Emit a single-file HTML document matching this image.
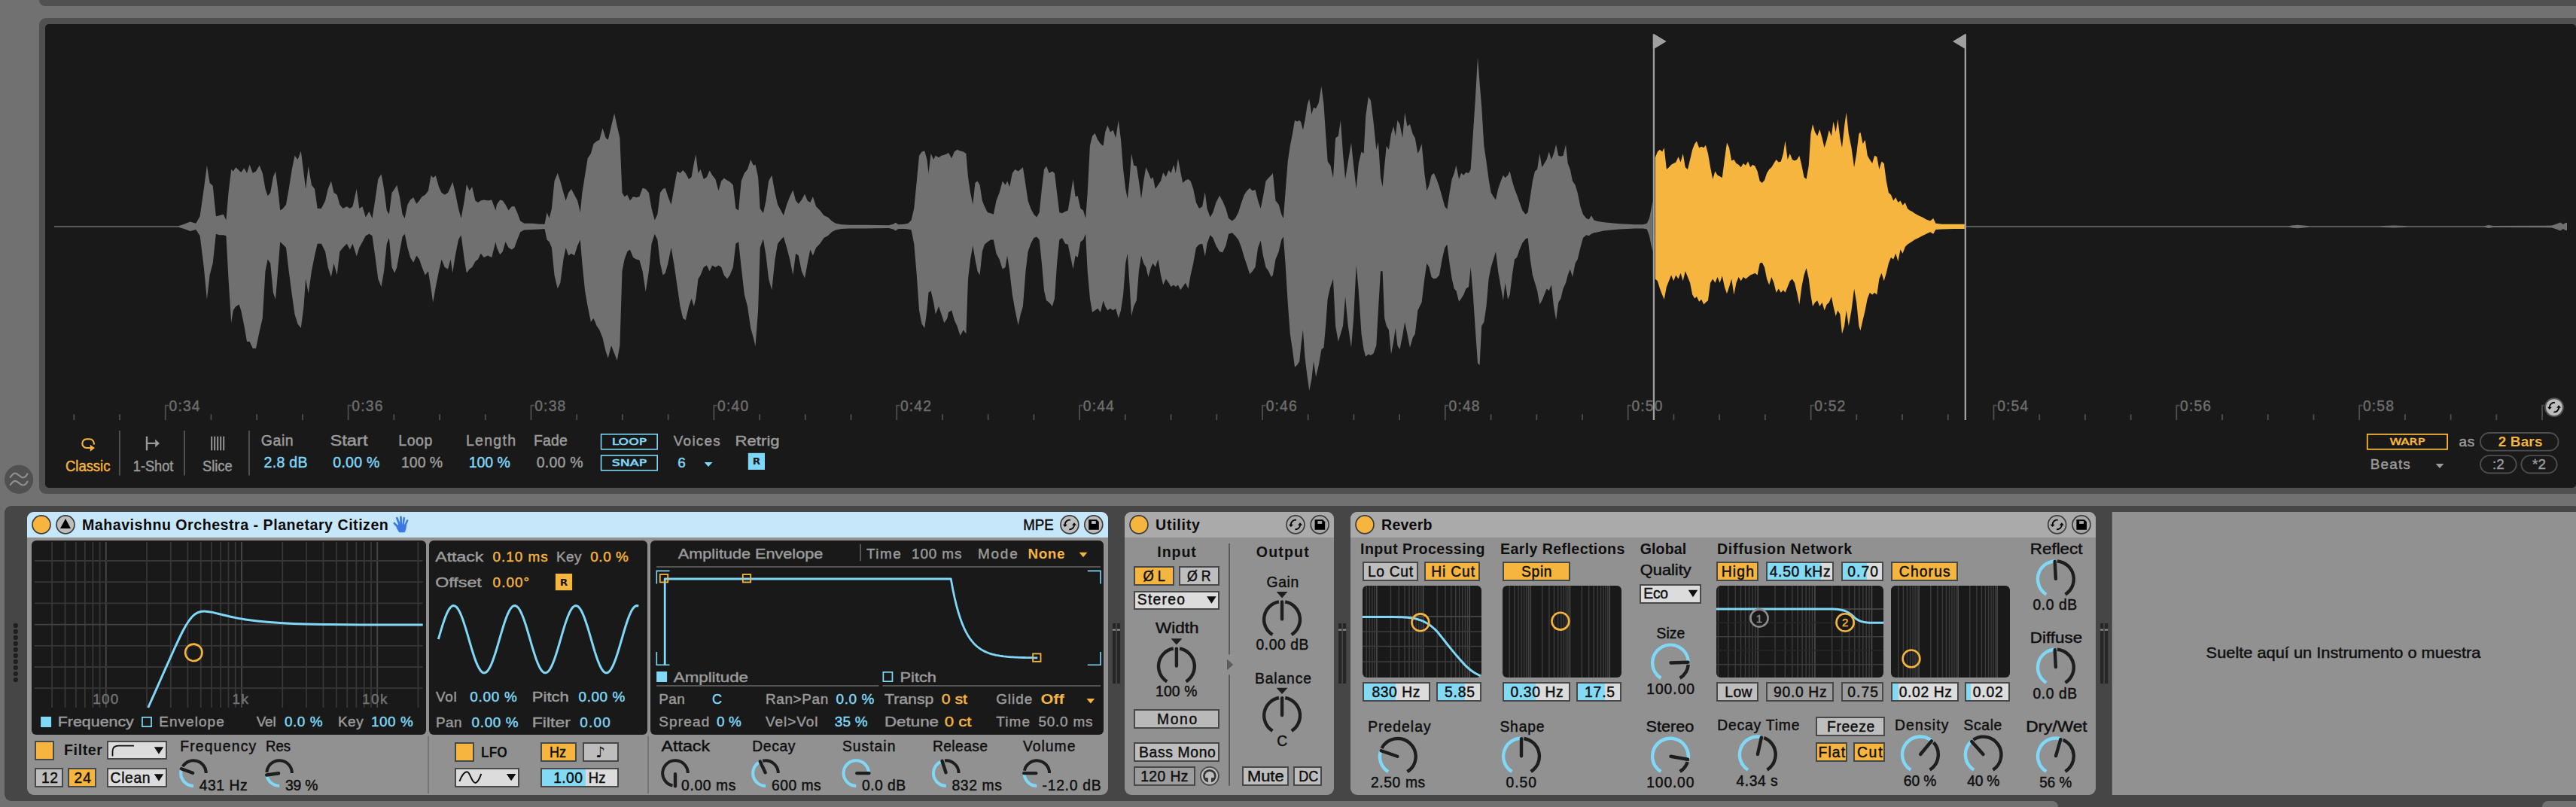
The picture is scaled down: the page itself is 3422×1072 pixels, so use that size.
<!DOCTYPE html>
<html lang="es"><head><meta charset="utf-8"><title>Live - Simpler</title>
<style>
html,body{margin:0;padding:0;background:#717171;overflow:hidden}
body{width:3422px;height:1072px}
svg{display:block;font-family:"Liberation Sans",sans-serif}
text{white-space:pre}
.wide{font-family:"DejaVu Sans","Liberation Sans",sans-serif}
</style></head><body>
<svg width="3422" height="1072" viewBox="0 0 3422 1072">
<g id="sample-panel">
<rect x="52.00" y="-10.00" width="3422.00" height="18.00" fill="#505050" rx="8" />
<rect x="52.00" y="24.00" width="3422.00" height="632.00" fill="#505050" rx="9" />
<rect x="60.00" y="32.00" width="3362.00" height="616.00" fill="#191919" rx="5" />
<polygon points="72.0,300.15 236.9,300.15 244.7,297.75 252.5,294.62 260.3,296.70 265.6,287.34 270.8,250.91 274.9,219.69 278.6,243.10 282.7,246.75 286.9,287.34 291.6,286.30 296.8,284.74 300.4,292.54 303.5,256.11 307.2,224.89 309.8,227.49 313.4,222.29 317.6,226.45 320.2,229.05 324.4,223.33 328.0,230.10 331.6,218.65 335.8,230.10 340.0,227.49 344.6,219.69 348.8,230.10 352.5,250.91 355.6,260.28 359.2,256.11 362.9,235.30 366.0,227.49 369.1,250.91 372.2,279.53 375.9,276.93 380.0,271.73 383.7,250.91 387.8,224.89 391.5,206.68 395.6,211.88 399.8,200.43 403.5,230.10 406.1,250.91 409.7,220.73 413.9,245.71 418.0,250.91 421.7,276.93 426.9,276.93 432.1,266.52 435.7,250.91 439.9,240.50 443.5,256.11 447.7,258.72 451.3,271.73 455.5,276.93 460.7,274.33 464.9,276.93 468.5,274.33 473.7,250.91 477.3,276.93 481.5,274.33 485.7,288.38 490.4,281.09 494.5,289.94 498.2,266.52 502.3,237.90 506.5,231.14 510.1,250.91 513.8,279.53 516.9,284.74 520.5,256.11 524.2,250.91 527.3,245.71 530.9,261.32 534.6,284.74 537.7,289.94 541.4,271.73 545.0,265.48 549.2,262.36 553.3,270.69 557.0,266.52 560.6,261.32 564.8,258.72 568.9,253.51 572.6,232.70 575.2,236.34 578.8,233.22 583.0,248.31 586.6,256.11 590.8,258.72 595.0,256.11 598.6,248.31 601.2,241.54 604.8,256.11 609.0,276.93 612.6,289.94 616.8,266.52 619.9,244.67 623.6,253.51 627.2,248.31 631.4,266.52 635.0,269.12 638.7,266.52 642.8,265.48 648.0,266.52 653.2,265.48 658.4,279.53 660.0,271.73 664.2,265.48 667.8,266.52 671.4,271.73 675.6,279.53 679.8,274.33 683.4,274.33 687.1,282.13 691.2,293.58 696.4,296.70 706.8,296.70 717.2,297.75 723.5,297.75 726.6,282.13 729.7,289.94 732.9,276.93 736.5,240.50 740.7,230.10 744.3,240.50 748.5,256.11 751.6,266.52 755.2,256.11 758.9,250.91 763.0,258.72 767.2,266.52 770.8,282.13 773.4,256.11 777.1,232.70 780.7,210.32 784.9,204.08 788.5,191.07 792.7,187.42 796.3,185.86 800.5,170.25 804.7,183.26 807.8,185.86 812.0,167.65 816.1,150.48 819.8,167.65 823.4,183.26 826.5,256.11 829.6,261.32 833.3,258.72 836.9,266.52 841.1,261.32 845.3,262.36 849.4,261.32 853.6,249.87 857.7,250.91 861.9,256.11 865.6,276.93 869.7,292.54 873.4,284.74 877.0,256.11 880.6,250.91 883.8,249.87 887.4,261.32 891.6,271.73 895.2,250.91 899.4,227.49 903.5,230.10 907.2,225.93 910.8,230.10 915.0,237.90 918.6,235.30 921.8,217.09 924.4,205.12 927.5,230.10 930.6,224.89 934.8,237.90 938.9,235.30 942.6,226.45 946.2,232.70 950.4,237.90 954.5,253.51 958.2,240.50 961.8,236.86 966.0,239.46 969.6,241.54 973.8,245.71 977.4,276.93 981.1,279.53 984.7,240.50 988.9,230.10 993.0,224.89 997.2,211.88 1000.8,219.69 1003.5,218.65 1007.1,235.30 1009.7,276.93 1013.9,283.17 1017.5,266.52 1021.1,240.50 1025.3,232.70 1029.5,256.11 1033.1,271.73 1037.3,279.53 1040.9,286.30 1045.1,271.73 1049.2,261.32 1053.4,252.47 1057.1,266.52 1060.7,270.69 1064.9,265.48 1069.0,257.68 1072.7,266.52 1076.3,269.12 1079.9,261.32 1084.1,274.33 1089.3,279.53 1094.5,286.30 1099.7,288.38 1104.9,293.58 1110.1,296.70 1117.9,298.27 1128.3,298.79 1149.2,298.79 1180.4,299.31 1186.6,297.75 1189.7,295.66 1193.4,298.27 1201.2,297.75 1206.4,296.70 1210.6,292.54 1214.2,276.93 1217.8,240.50 1221.0,206.68 1224.6,201.47 1228.3,200.43 1231.4,211.88 1233.5,230.10 1236.6,204.08 1240.2,211.88 1242.8,206.68 1247.0,209.28 1250.6,206.68 1254.3,205.64 1258.4,204.08 1260.0,203.04 1264.2,210.32 1267.8,201.47 1271.4,198.87 1275.6,200.43 1279.8,201.47 1283.4,204.08 1286.0,235.30 1289.1,256.11 1292.3,271.73 1295.4,243.10 1298.5,240.50 1301.6,245.71 1304.8,266.52 1307.9,274.33 1312.0,282.13 1316.2,283.17 1319.8,284.74 1323.5,266.52 1327.6,256.11 1331.8,240.50 1335.5,245.71 1338.1,240.50 1341.2,248.31 1344.8,230.10 1348.5,224.89 1352.6,227.49 1355.8,224.89 1358.9,222.29 1362.5,245.71 1365.6,266.52 1369.3,276.93 1373.4,284.74 1377.1,288.38 1380.7,282.13 1383.9,250.91 1387.0,224.89 1390.1,220.73 1393.7,230.10 1397.9,227.49 1401.0,230.10 1404.1,256.11 1407.3,282.13 1410.9,283.17 1415.1,281.09 1418.7,279.53 1421.8,261.32 1425.5,237.90 1428.6,261.32 1431.7,260.28 1435.4,276.93 1439.0,279.53 1442.1,289.94 1444.7,256.11 1447.9,193.67 1451.0,180.66 1454.6,177.02 1458.3,185.86 1461.9,191.07 1465.6,193.67 1468.2,175.46 1471.3,166.61 1474.9,175.46 1478.6,172.85 1482.2,183.26 1485.8,159.84 1489.0,185.86 1492.1,224.89 1495.2,250.91 1497.8,263.92 1500.4,240.50 1503.0,204.08 1506.1,219.69 1509.8,220.73 1512.9,240.50 1516.0,263.92 1519.2,240.50 1522.3,222.29 1525.4,229.05 1529.0,237.90 1531.6,235.30 1534.8,250.91 1538.4,245.71 1542.0,240.50 1545.2,229.05 1548.8,235.30 1552.5,225.93 1555.6,230.10 1559.2,218.65 1561.8,230.10 1564.9,210.84 1568.1,227.49 1571.2,243.10 1574.8,239.46 1578.5,237.90 1581.6,240.50 1585.2,250.91 1588.9,269.12 1593.0,276.93 1597.2,274.33 1600.8,255.07 1603.5,276.93 1607.6,288.38 1611.3,282.13 1615.4,269.12 1620.1,259.76 1624.3,267.56 1628.4,276.93 1632.1,289.94 1636.8,293.58 1640.9,289.94 1645.1,282.13 1649.2,269.12 1652.9,258.72 1656.5,253.51 1660.2,249.87 1663.8,253.51 1667.5,251.95 1671.1,266.52 1674.7,276.93 1677.9,261.32 1681.5,240.50 1685.2,236.34 1688.8,232.70 1690.9,230.10 1694.5,266.52 1698.7,271.73 1702.3,284.74 1704.9,289.94 1707.5,256.11 1710.7,214.48 1713.8,193.67 1716.9,178.06 1720.0,159.84 1723.1,161.41 1726.3,159.84 1728.3,162.45 1730.9,172.85 1733.5,159.84 1736.7,139.03 1739.3,131.22 1742.4,152.04 1745.0,142.67 1748.1,144.23 1751.8,136.43 1755.4,114.57 1758.5,139.03 1761.1,178.06 1763.7,214.48 1767.4,219.69 1771.0,236.34 1774.1,183.26 1777.8,180.66 1780.9,159.84 1784.0,204.08 1787.1,237.90 1790.8,214.48 1795.0,189.51 1798.1,219.69 1801.7,250.91 1804.8,217.09 1808.5,201.47 1811.6,204.08 1814.2,154.64 1817.8,128.62 1821.0,133.82 1824.6,162.45 1828.3,198.87 1830.9,188.46 1834.0,235.30 1836.6,248.31 1839.2,219.69 1841.8,193.67 1844.9,198.87 1848.0,178.06 1851.2,167.65 1853.8,180.66 1856.4,159.84 1859.5,165.05 1863.1,183.26 1866.2,149.44 1869.4,167.65 1873.0,165.05 1876.7,178.06 1879.8,183.26 1883.4,204.08 1886.0,198.87 1888.6,191.07 1892.3,230.10 1895.4,253.51 1898.5,245.71 1901.6,232.70 1904.8,230.10 1908.4,237.90 1912.0,248.31 1915.7,261.32 1919.3,274.33 1922.4,277.97 1925.6,256.11 1928.7,237.90 1931.8,230.10 1934.4,219.69 1938.1,237.90 1941.2,230.10 1944.3,232.70 1947.4,229.05 1951.1,230.10 1953.7,224.89 1956.8,178.06 1959.9,131.22 1963.0,76.06 1965.6,110.41 1968.2,141.63 1971.4,193.67 1974.5,214.48 1977.6,237.90 1980.7,256.11 1983.9,261.32 1987.0,265.48 1990.1,250.91 1993.7,240.50 1996.9,232.70 1999.5,236.34 2003.1,232.70 2005.7,227.49 2008.8,240.50 2012.0,250.91 2015.1,258.72 2018.7,269.12 2022.4,279.53 2026.5,284.74 2029.6,282.13 2032.8,261.32 2035.9,240.50 2039.0,227.49 2042.1,224.89 2045.3,204.08 2048.4,222.29 2051.5,217.09 2054.6,211.88 2057.7,201.47 2060.9,211.88 2064.0,204.08 2067.1,192.11 2070.2,206.68 2073.4,207.72 2076.5,206.68 2080.1,192.11 2082.7,217.09 2085.8,224.89 2089.0,240.50 2092.6,245.71 2095.7,256.11 2099.4,274.33 2103.0,284.74 2107.2,289.94 2110.8,291.50 2113.9,286.30 2117.6,292.54 2122.8,294.10 2130.6,295.14 2141.0,296.18 2151.4,297.22 2161.8,297.75 2172.2,298.27 2182.6,298.27 2187.8,296.70 2191.0,289.94 2193.6,276.93 2195.6,266.52 2195.6,334.17 2193.6,326.37 2191.0,313.36 2187.8,304.51 2182.6,303.47 2172.2,303.47 2161.8,303.99 2151.4,304.51 2141.0,305.55 2130.6,306.59 2122.8,308.15 2117.6,309.19 2113.9,310.75 2110.8,313.36 2107.2,312.32 2103.0,315.96 2099.4,328.97 2095.7,344.58 2092.6,349.78 2089.0,368.00 2085.8,357.59 2082.7,365.39 2080.1,375.80 2076.5,383.61 2073.4,396.62 2070.2,401.82 2067.1,425.24 2064.0,407.03 2060.9,378.40 2057.7,386.21 2054.6,383.61 2051.5,391.41 2048.4,399.22 2045.3,404.42 2042.1,386.21 2039.0,375.80 2035.9,365.39 2032.8,344.58 2029.6,315.96 2026.5,317.52 2022.4,322.72 2018.7,331.57 2015.1,341.98 2012.0,344.58 2008.8,365.39 2005.7,391.41 2003.1,397.66 1999.5,375.80 1996.9,399.22 1993.7,381.01 1990.1,360.19 1987.0,334.17 1983.9,344.58 1980.7,354.99 1977.6,370.60 1974.5,407.03 1971.4,427.84 1968.2,433.04 1965.6,485.08 1963.0,482.48 1959.9,438.25 1956.8,391.41 1953.7,354.99 1951.1,381.01 1947.4,383.61 1944.3,391.41 1941.2,396.62 1938.1,400.78 1934.4,386.21 1931.8,383.61 1928.7,370.60 1925.6,349.78 1922.4,324.80 1919.3,328.97 1915.7,344.58 1912.0,365.39 1908.4,369.56 1904.8,370.60 1901.6,368.00 1898.5,354.99 1895.4,349.78 1892.3,370.60 1888.6,401.82 1886.0,407.03 1883.4,412.23 1879.8,443.45 1876.7,448.66 1873.0,461.67 1869.4,443.45 1866.2,427.84 1863.1,446.05 1859.5,464.27 1856.4,459.06 1853.8,435.65 1851.2,453.86 1848.0,470.51 1844.9,438.25 1841.8,433.04 1839.2,422.64 1836.6,360.19 1834.0,360.19 1830.9,412.23 1828.3,459.06 1824.6,469.47 1821.0,472.07 1817.8,470.51 1814.2,473.63 1811.6,464.27 1808.5,443.45 1804.8,386.21 1801.7,352.39 1798.1,422.64 1795.0,461.67 1790.8,433.04 1787.1,394.02 1784.0,433.04 1780.9,443.45 1777.8,453.86 1774.1,433.04 1771.0,370.60 1767.4,381.01 1763.7,396.62 1761.1,433.04 1758.5,461.67 1755.4,464.27 1751.8,485.08 1748.1,500.69 1745.0,479.88 1742.4,503.30 1739.3,518.91 1736.7,500.69 1733.5,474.67 1730.9,438.25 1728.3,459.06 1726.3,479.88 1723.1,485.08 1720.0,487.68 1716.9,464.27 1713.8,443.45 1710.7,401.82 1707.5,349.78 1704.9,314.40 1702.3,318.56 1698.7,334.17 1694.5,344.58 1690.9,365.39 1688.8,368.00 1685.2,360.19 1681.5,354.99 1677.9,339.38 1674.7,319.60 1671.1,328.97 1667.5,354.99 1663.8,360.19 1660.2,364.35 1656.5,352.39 1652.9,341.98 1649.2,328.97 1645.1,318.56 1640.9,313.36 1636.8,309.19 1632.1,310.75 1628.4,326.37 1624.3,335.21 1620.1,334.17 1615.4,326.37 1611.3,315.96 1607.6,312.32 1603.5,323.76 1600.8,340.42 1597.2,323.76 1593.0,324.80 1588.9,328.97 1585.2,349.78 1581.6,365.39 1578.5,383.61 1574.8,375.80 1571.2,381.01 1568.1,385.17 1564.9,378.40 1561.8,381.01 1559.2,378.40 1555.6,381.01 1552.5,375.80 1548.8,370.60 1545.2,378.40 1542.0,365.39 1538.4,344.58 1534.8,354.99 1531.6,349.78 1529.0,354.99 1525.4,368.00 1522.3,354.99 1519.2,349.78 1516.0,339.38 1512.9,360.19 1509.8,399.22 1506.1,407.03 1503.0,420.03 1500.4,375.80 1497.8,336.77 1495.2,349.78 1492.1,391.41 1489.0,412.23 1485.8,422.64 1482.2,409.63 1478.6,412.23 1474.9,409.63 1471.3,412.23 1468.2,407.03 1465.6,399.22 1461.9,414.83 1458.3,409.63 1454.6,412.23 1451.0,414.83 1447.9,396.62 1444.7,360.19 1442.1,310.75 1439.0,318.56 1435.4,321.16 1431.7,341.98 1428.6,339.38 1425.5,357.59 1421.8,339.38 1418.7,324.80 1415.1,323.76 1410.9,315.96 1407.3,318.56 1404.1,349.78 1401.0,396.62 1397.9,407.03 1393.7,401.82 1390.1,399.22 1387.0,386.21 1383.9,349.78 1380.7,318.56 1377.1,314.40 1373.4,315.96 1369.3,323.76 1365.6,334.17 1362.5,360.19 1358.9,407.03 1355.8,417.43 1352.6,432.00 1348.5,412.23 1344.8,391.41 1341.2,360.19 1338.1,339.38 1335.5,354.99 1331.8,357.59 1327.6,344.58 1323.5,336.77 1319.8,318.56 1316.2,318.56 1312.0,321.16 1307.9,324.80 1304.8,334.17 1301.6,365.39 1298.5,360.19 1295.4,344.58 1292.3,326.37 1289.1,344.58 1286.0,370.60 1283.4,443.45 1279.8,438.25 1275.6,446.05 1271.4,433.04 1267.8,425.24 1264.2,412.23 1260.0,414.83 1258.4,422.64 1254.3,428.88 1250.6,417.43 1247.0,407.03 1242.8,417.43 1240.2,401.82 1236.6,386.21 1233.5,388.81 1231.4,412.23 1228.3,435.65 1224.6,430.44 1221.0,412.23 1217.8,365.39 1214.2,323.76 1210.6,305.55 1206.4,304.51 1201.2,303.99 1193.4,303.99 1189.7,306.59 1186.6,304.51 1180.4,302.95 1149.2,303.47 1128.3,303.47 1117.9,303.99 1110.1,305.55 1104.9,308.15 1099.7,313.36 1094.5,315.96 1089.3,323.76 1084.1,328.97 1079.9,339.38 1076.3,331.57 1072.7,349.78 1069.0,369.56 1064.9,360.19 1060.7,339.38 1057.1,336.77 1053.4,365.39 1049.2,344.58 1045.1,328.97 1040.9,314.40 1037.3,318.56 1033.1,323.76 1029.5,344.58 1025.3,385.17 1021.1,370.60 1017.5,339.38 1013.9,317.52 1009.7,328.97 1007.1,412.23 1003.5,460.10 1000.8,448.66 997.2,435.65 993.0,407.03 988.9,391.41 984.7,354.99 981.1,321.16 977.4,323.76 973.8,354.99 969.6,365.39 966.0,370.60 961.8,365.39 958.2,354.99 954.5,352.39 950.4,354.99 946.2,352.39 942.6,360.19 938.9,352.39 934.8,354.99 930.6,365.39 927.5,370.60 924.4,396.62 921.8,407.03 918.6,396.62 915.0,407.03 910.8,425.24 907.2,422.64 903.5,407.03 899.4,378.40 895.2,349.78 891.6,328.97 887.4,349.78 883.8,362.79 880.6,365.39 877.0,349.78 873.4,318.56 869.7,310.75 865.6,323.76 861.9,360.19 857.7,387.77 853.6,360.19 849.4,345.62 845.3,344.58 841.1,341.98 836.9,331.57 833.3,334.17 829.6,344.58 826.5,360.19 823.4,459.06 819.8,478.84 816.1,469.47 812.0,459.06 807.8,475.72 804.7,466.87 800.5,448.66 796.3,438.25 792.7,433.04 788.5,422.64 784.9,427.84 780.7,407.03 777.1,386.21 773.4,349.78 770.8,318.56 767.2,326.37 763.0,339.38 758.9,336.77 755.2,339.38 751.6,328.97 748.5,344.58 744.3,375.80 740.7,383.61 736.5,365.39 732.9,328.97 729.7,321.16 726.6,318.56 723.5,303.99 717.2,304.51 706.8,305.03 696.4,305.55 691.2,308.15 687.1,318.56 683.4,328.97 679.8,331.57 675.6,328.97 671.4,321.16 667.8,334.17 664.2,338.33 660.0,328.97 658.4,321.16 653.2,341.98 648.0,339.38 642.8,341.98 638.7,336.77 635.0,344.58 631.4,347.18 627.2,354.99 623.6,357.59 619.9,362.79 616.8,344.58 612.6,312.32 609.0,318.56 604.8,339.38 601.2,362.79 598.6,344.58 595.0,357.59 590.8,354.99 586.6,344.58 583.0,360.19 578.8,381.01 575.2,401.82 572.6,383.61 568.9,360.19 564.8,365.39 560.6,354.99 557.0,344.58 553.3,339.38 549.2,348.74 545.0,341.98 541.4,328.97 537.7,310.75 534.6,314.40 530.9,334.17 527.3,354.99 524.2,362.79 520.5,354.99 516.9,315.96 513.8,323.76 510.1,360.19 506.5,381.01 502.3,370.60 498.2,339.38 494.5,313.36 490.4,310.75 485.7,313.36 481.5,321.16 477.3,328.97 473.7,340.42 468.5,323.76 464.9,331.57 460.7,323.76 455.5,328.97 451.3,334.17 447.7,365.39 443.5,349.78 439.9,368.00 435.7,354.99 432.1,334.17 426.9,323.76 421.7,323.76 418.0,339.38 413.9,360.19 409.7,389.85 406.1,370.60 403.5,407.03 399.8,435.65 395.6,430.44 391.5,417.43 387.8,391.41 383.7,360.19 380.0,328.97 375.9,324.80 372.2,321.16 369.1,360.19 366.0,397.66 362.9,388.81 359.2,349.78 355.6,344.58 352.5,360.19 348.8,422.64 344.6,440.85 340.0,462.71 335.8,462.71 331.6,453.86 328.0,453.86 324.4,433.04 320.2,412.23 317.6,404.42 313.4,407.03 309.8,412.23 307.2,428.88 303.5,370.60 300.4,313.36 296.8,312.32 291.6,312.32 286.9,310.75 282.7,349.78 278.6,365.39 274.9,397.66 270.8,354.99 265.6,313.36 260.3,305.03 252.5,307.11 244.7,303.99 236.9,301.85 72.0,301.85" fill="#707070"/>
<polygon points="2198.8,209.28 2201.9,201.47 2205.0,198.87 2208.1,201.47 2210.7,196.27 2213.9,224.89 2217.0,222.29 2220.1,218.65 2223.2,217.09 2226.3,215.52 2229.5,208.24 2232.6,215.52 2235.7,204.08 2238.8,222.29 2242.0,224.89 2245.1,211.88 2248.2,198.87 2251.3,191.07 2253.9,187.42 2257.1,196.27 2260.2,194.71 2263.3,196.27 2265.9,192.63 2269.0,204.08 2272.1,222.29 2275.3,237.90 2278.4,227.49 2281.5,232.70 2284.6,234.26 2287.8,236.34 2290.9,211.88 2294.0,189.51 2297.1,196.27 2300.2,213.44 2303.4,211.88 2306.5,217.09 2309.6,218.65 2312.7,222.29 2315.9,217.09 2319.0,219.69 2322.1,214.48 2325.2,222.29 2328.3,218.65 2331.5,220.73 2334.6,227.49 2337.7,240.50 2340.8,243.10 2344.0,239.46 2347.1,230.10 2350.2,224.89 2353.3,222.29 2356.4,217.09 2359.6,211.88 2362.7,215.52 2365.8,214.48 2368.9,204.08 2371.5,186.90 2374.7,211.88 2377.8,204.08 2380.9,211.88 2384.0,213.44 2387.1,211.88 2390.3,206.68 2393.4,219.69 2396.5,235.30 2399.6,237.90 2402.8,219.69 2405.4,178.06 2408.0,165.05 2411.1,175.46 2414.2,180.66 2417.3,171.81 2420.5,183.26 2423.6,196.27 2426.7,185.86 2429.8,172.85 2432.9,180.66 2435.5,161.41 2438.7,175.46 2441.3,158.28 2444.4,183.26 2447.0,196.27 2450.1,167.65 2452.7,149.44 2455.8,178.06 2459.5,196.27 2463.1,222.29 2466.2,204.08 2469.4,178.06 2471.4,175.46 2474.6,191.07 2477.7,185.86 2480.8,206.68 2483.9,211.88 2487.1,217.09 2490.2,206.68 2493.3,208.24 2496.4,224.89 2499.5,214.48 2502.7,217.09 2505.8,240.50 2508.9,256.11 2512.0,258.72 2515.2,266.52 2518.3,262.36 2521.4,269.12 2524.5,266.52 2527.6,272.77 2530.8,269.12 2533.9,276.93 2537.0,279.53 2540.1,281.09 2543.3,283.17 2548.5,286.30 2553.7,288.38 2558.9,291.50 2564.1,293.58 2568.2,289.94 2571.4,296.70 2579.7,297.75 2595.3,297.75 2609.9,297.75 2609.9,303.99 2595.3,303.99 2579.7,304.51 2571.4,305.03 2568.2,310.75 2564.1,308.15 2558.9,310.75 2553.7,313.36 2548.5,315.96 2543.3,318.56 2540.1,320.64 2537.0,322.72 2533.9,324.80 2530.8,327.93 2527.6,336.77 2524.5,331.57 2521.4,347.18 2518.3,336.77 2515.2,344.58 2512.0,341.98 2508.9,349.78 2505.8,362.79 2502.7,373.20 2499.5,362.79 2496.4,370.60 2493.3,391.41 2490.2,388.81 2487.1,391.41 2483.9,388.81 2480.8,396.62 2477.7,412.23 2474.6,425.24 2471.4,439.29 2469.4,433.04 2466.2,401.82 2463.1,383.61 2459.5,412.23 2455.8,433.04 2452.7,412.23 2450.1,433.04 2447.0,443.45 2444.4,417.43 2441.3,412.23 2438.7,420.03 2435.5,407.03 2432.9,394.02 2429.8,401.82 2426.7,404.42 2423.6,412.23 2420.5,401.82 2417.3,407.03 2414.2,399.22 2411.1,401.82 2408.0,407.03 2405.4,391.41 2402.8,370.60 2399.6,356.03 2396.5,365.39 2393.4,381.01 2390.3,404.42 2387.1,388.81 2384.0,375.80 2380.9,370.60 2377.8,373.20 2374.7,381.01 2371.5,388.81 2368.9,385.17 2365.8,388.81 2362.7,383.61 2359.6,388.81 2356.4,375.80 2353.3,368.00 2350.2,378.40 2347.1,370.60 2344.0,354.99 2340.8,348.74 2337.7,349.78 2334.6,365.39 2331.5,362.79 2328.3,364.35 2325.2,365.39 2322.1,368.00 2319.0,370.60 2315.9,368.00 2312.7,373.20 2309.6,368.00 2306.5,375.80 2303.4,391.41 2300.2,370.60 2297.1,381.01 2294.0,390.37 2290.9,381.01 2287.8,366.44 2284.6,375.80 2281.5,368.00 2278.4,375.80 2275.3,370.60 2272.1,375.80 2269.0,399.22 2265.9,401.82 2263.3,404.42 2260.2,397.66 2257.1,400.78 2253.9,394.02 2251.3,396.62 2248.2,391.41 2245.1,375.80 2242.0,368.00 2238.8,360.19 2235.7,373.20 2232.6,362.79 2229.5,370.60 2226.3,365.39 2223.2,373.20 2220.1,365.39 2217.0,373.20 2213.9,381.01 2210.7,397.66 2208.1,391.41 2205.0,383.61 2201.9,373.20 2198.8,370.60" fill="#f5b53f"/>
<polygon points="2612.0,300.15 2900.0,300.15 3040.0,300.15 3046.0,299.30 3052.0,298.80 3060.0,299.60 3068.0,300.15 3160.0,300.15 3180.0,299.60 3200.0,300.15 3300.0,300.15 3306.0,299.00 3312.0,300.10 3380.0,299.80 3390.0,299.50 3396.0,297.50 3401.0,295.50 3405.0,298.00 3408.0,296.00 3410.0,296.00 3410.0,306.00 3408.0,306.00 3405.0,304.00 3401.0,306.50 3396.0,304.50 3390.0,302.50 3380.0,302.20 3312.0,301.90 3306.0,303.00 3300.0,301.85 3200.0,301.85 3180.0,302.40 3160.0,301.85 3068.0,301.85 3060.0,302.40 3052.0,303.20 3046.0,302.70 3040.0,301.85 2900.0,301.85 2612.0,301.85" fill="#707070"/>
<rect x="2195.80" y="45.50" width="2.30" height="512.50" fill="#a0a0a0" />
<path d="M2195.8 45.5 L2198 45.5 L2213.7 55 L2198 64.5 L2195.8 64.5Z" fill="#a0a0a0" />
<rect x="2609.70" y="45.50" width="2.30" height="512.50" fill="#a0a0a0" />
<path d="M2612 45.5 L2609.8 45.5 L2594 55 L2609.8 64.5 L2612 64.5Z" fill="#a0a0a0" />
<line x1="98.31" y1="550.30" x2="98.31" y2="558.00" stroke="#4e4e4e" stroke-width="1.8" />
<line x1="159.03" y1="550.30" x2="159.03" y2="558.00" stroke="#4e4e4e" stroke-width="1.8" />
<path d="M219.75 558 V538.6 H224.00" fill="none" stroke="#4e4e4e" stroke-width="1.8" />
<text x="224.50" y="546.20" font-size="19.3" fill="#6c6c6c" stroke="#6c6c6c" stroke-width="0.45" textLength="41.00" >0:34</text>
<line x1="280.47" y1="550.30" x2="280.47" y2="558.00" stroke="#4e4e4e" stroke-width="1.8" />
<line x1="341.19" y1="550.30" x2="341.19" y2="558.00" stroke="#4e4e4e" stroke-width="1.8" />
<line x1="401.90" y1="550.30" x2="401.90" y2="558.00" stroke="#4e4e4e" stroke-width="1.8" />
<path d="M462.62 558 V538.6 H466.87" fill="none" stroke="#4e4e4e" stroke-width="1.8" />
<text x="467.37" y="546.20" font-size="19.3" fill="#6c6c6c" stroke="#6c6c6c" stroke-width="0.45" textLength="41.00" >0:36</text>
<line x1="523.34" y1="550.30" x2="523.34" y2="558.00" stroke="#4e4e4e" stroke-width="1.8" />
<line x1="584.06" y1="550.30" x2="584.06" y2="558.00" stroke="#4e4e4e" stroke-width="1.8" />
<line x1="644.77" y1="550.30" x2="644.77" y2="558.00" stroke="#4e4e4e" stroke-width="1.8" />
<path d="M705.49 558 V538.6 H709.74" fill="none" stroke="#4e4e4e" stroke-width="1.8" />
<text x="710.24" y="546.20" font-size="19.3" fill="#6c6c6c" stroke="#6c6c6c" stroke-width="0.45" textLength="41.00" >0:38</text>
<line x1="766.21" y1="550.30" x2="766.21" y2="558.00" stroke="#4e4e4e" stroke-width="1.8" />
<line x1="826.92" y1="550.30" x2="826.92" y2="558.00" stroke="#4e4e4e" stroke-width="1.8" />
<line x1="887.64" y1="550.30" x2="887.64" y2="558.00" stroke="#4e4e4e" stroke-width="1.8" />
<path d="M948.36 558 V538.6 H952.61" fill="none" stroke="#4e4e4e" stroke-width="1.8" />
<text x="953.11" y="546.20" font-size="19.3" fill="#6c6c6c" stroke="#6c6c6c" stroke-width="0.45" textLength="41.00" >0:40</text>
<line x1="1009.08" y1="550.30" x2="1009.08" y2="558.00" stroke="#4e4e4e" stroke-width="1.8" />
<line x1="1069.80" y1="550.30" x2="1069.80" y2="558.00" stroke="#4e4e4e" stroke-width="1.8" />
<line x1="1130.51" y1="550.30" x2="1130.51" y2="558.00" stroke="#4e4e4e" stroke-width="1.8" />
<path d="M1191.23 558 V538.6 H1195.48" fill="none" stroke="#4e4e4e" stroke-width="1.8" />
<text x="1195.98" y="546.20" font-size="19.3" fill="#6c6c6c" stroke="#6c6c6c" stroke-width="0.45" textLength="41.00" >0:42</text>
<line x1="1251.95" y1="550.30" x2="1251.95" y2="558.00" stroke="#4e4e4e" stroke-width="1.8" />
<line x1="1312.66" y1="550.30" x2="1312.66" y2="558.00" stroke="#4e4e4e" stroke-width="1.8" />
<line x1="1373.38" y1="550.30" x2="1373.38" y2="558.00" stroke="#4e4e4e" stroke-width="1.8" />
<path d="M1434.10 558 V538.6 H1438.35" fill="none" stroke="#4e4e4e" stroke-width="1.8" />
<text x="1438.85" y="546.20" font-size="19.3" fill="#6c6c6c" stroke="#6c6c6c" stroke-width="0.45" textLength="41.00" >0:44</text>
<line x1="1494.82" y1="550.30" x2="1494.82" y2="558.00" stroke="#4e4e4e" stroke-width="1.8" />
<line x1="1555.54" y1="550.30" x2="1555.54" y2="558.00" stroke="#4e4e4e" stroke-width="1.8" />
<line x1="1616.25" y1="550.30" x2="1616.25" y2="558.00" stroke="#4e4e4e" stroke-width="1.8" />
<path d="M1676.97 558 V538.6 H1681.22" fill="none" stroke="#4e4e4e" stroke-width="1.8" />
<text x="1681.72" y="546.20" font-size="19.3" fill="#6c6c6c" stroke="#6c6c6c" stroke-width="0.45" textLength="41.00" >0:46</text>
<line x1="1737.69" y1="550.30" x2="1737.69" y2="558.00" stroke="#4e4e4e" stroke-width="1.8" />
<line x1="1798.40" y1="550.30" x2="1798.40" y2="558.00" stroke="#4e4e4e" stroke-width="1.8" />
<line x1="1859.12" y1="550.30" x2="1859.12" y2="558.00" stroke="#4e4e4e" stroke-width="1.8" />
<path d="M1919.84 558 V538.6 H1924.09" fill="none" stroke="#4e4e4e" stroke-width="1.8" />
<text x="1924.59" y="546.20" font-size="19.3" fill="#6c6c6c" stroke="#6c6c6c" stroke-width="0.45" textLength="41.00" >0:48</text>
<line x1="1980.56" y1="550.30" x2="1980.56" y2="558.00" stroke="#4e4e4e" stroke-width="1.8" />
<line x1="2041.28" y1="550.30" x2="2041.28" y2="558.00" stroke="#4e4e4e" stroke-width="1.8" />
<line x1="2101.99" y1="550.30" x2="2101.99" y2="558.00" stroke="#4e4e4e" stroke-width="1.8" />
<path d="M2162.71 558 V538.6 H2166.96" fill="none" stroke="#4e4e4e" stroke-width="1.8" />
<text x="2167.46" y="546.20" font-size="19.3" fill="#6c6c6c" stroke="#6c6c6c" stroke-width="0.45" textLength="41.00" >0:50</text>
<line x1="2223.43" y1="550.30" x2="2223.43" y2="558.00" stroke="#4e4e4e" stroke-width="1.8" />
<line x1="2284.14" y1="550.30" x2="2284.14" y2="558.00" stroke="#4e4e4e" stroke-width="1.8" />
<line x1="2344.86" y1="550.30" x2="2344.86" y2="558.00" stroke="#4e4e4e" stroke-width="1.8" />
<path d="M2405.58 558 V538.6 H2409.83" fill="none" stroke="#4e4e4e" stroke-width="1.8" />
<text x="2410.33" y="546.20" font-size="19.3" fill="#6c6c6c" stroke="#6c6c6c" stroke-width="0.45" textLength="41.00" >0:52</text>
<line x1="2466.30" y1="550.30" x2="2466.30" y2="558.00" stroke="#4e4e4e" stroke-width="1.8" />
<line x1="2527.01" y1="550.30" x2="2527.01" y2="558.00" stroke="#4e4e4e" stroke-width="1.8" />
<line x1="2587.73" y1="550.30" x2="2587.73" y2="558.00" stroke="#4e4e4e" stroke-width="1.8" />
<path d="M2648.45 558 V538.6 H2652.70" fill="none" stroke="#4e4e4e" stroke-width="1.8" />
<text x="2653.20" y="546.20" font-size="19.3" fill="#6c6c6c" stroke="#6c6c6c" stroke-width="0.45" textLength="41.00" >0:54</text>
<line x1="2709.17" y1="550.30" x2="2709.17" y2="558.00" stroke="#4e4e4e" stroke-width="1.8" />
<line x1="2769.89" y1="550.30" x2="2769.89" y2="558.00" stroke="#4e4e4e" stroke-width="1.8" />
<line x1="2830.60" y1="550.30" x2="2830.60" y2="558.00" stroke="#4e4e4e" stroke-width="1.8" />
<path d="M2891.32 558 V538.6 H2895.57" fill="none" stroke="#4e4e4e" stroke-width="1.8" />
<text x="2896.07" y="546.20" font-size="19.3" fill="#6c6c6c" stroke="#6c6c6c" stroke-width="0.45" textLength="41.00" >0:56</text>
<line x1="2952.04" y1="550.30" x2="2952.04" y2="558.00" stroke="#4e4e4e" stroke-width="1.8" />
<line x1="3012.76" y1="550.30" x2="3012.76" y2="558.00" stroke="#4e4e4e" stroke-width="1.8" />
<line x1="3073.47" y1="550.30" x2="3073.47" y2="558.00" stroke="#4e4e4e" stroke-width="1.8" />
<path d="M3134.19 558 V538.6 H3138.44" fill="none" stroke="#4e4e4e" stroke-width="1.8" />
<text x="3138.94" y="546.20" font-size="19.3" fill="#6c6c6c" stroke="#6c6c6c" stroke-width="0.45" textLength="41.00" >0:58</text>
<line x1="3194.91" y1="550.30" x2="3194.91" y2="558.00" stroke="#4e4e4e" stroke-width="1.8" />
<line x1="3255.62" y1="550.30" x2="3255.62" y2="558.00" stroke="#4e4e4e" stroke-width="1.8" />
<line x1="3316.34" y1="550.30" x2="3316.34" y2="558.00" stroke="#4e4e4e" stroke-width="1.8" />
<path d="M3377.06 558 V538.6 H3381.31" fill="none" stroke="#4e4e4e" stroke-width="1.8" />
</g>
<g id="sample-controls">
<line x1="158.90" y1="572.00" x2="158.90" y2="631.60" stroke="#505050" stroke-width="2" />
<line x1="245.00" y1="572.00" x2="245.00" y2="631.60" stroke="#505050" stroke-width="2" />
<line x1="331.00" y1="572.00" x2="331.00" y2="631.60" stroke="#505050" stroke-width="2" />
<path d="M124.85 590.6 V589.1 A5.8 5.8 0 0 0 119.05 583.3 H114.9 A5.83 5.83 0 0 0 114.9 594.95 H120.5" fill="none" stroke="#f5b53f" stroke-width="2.1" />
<path d="M119.8 590.7 L125.9 595.05 L119.8 599.7Z" fill="#f5b53f" />
<text x="87.00" y="625.70" font-size="19.5" fill="#f5b53f" stroke="#f5b53f" stroke-width="0.45" textLength="59.40" lengthAdjust="spacingAndGlyphs" >Classic</text>
<line x1="195.00" y1="579.70" x2="195.00" y2="598.30" stroke="#9a9a9a" stroke-width="2.4" />
<line x1="195.00" y1="588.90" x2="206.50" y2="588.90" stroke="#9a9a9a" stroke-width="2.2" />
<path d="M206.2 583.6 L212 588.9 L206.2 594.3Z" fill="#9a9a9a" />
<text x="176.80" y="625.70" font-size="19.5" fill="#9a9a9a" stroke="#9a9a9a" stroke-width="0.45" textLength="53.60" lengthAdjust="spacingAndGlyphs" >1-Shot</text>
<line x1="281.20" y1="579.70" x2="281.20" y2="598.30" stroke="#9a9a9a" stroke-width="1.9" />
<line x1="285.20" y1="579.70" x2="285.20" y2="598.30" stroke="#9a9a9a" stroke-width="1.9" />
<line x1="289.20" y1="579.70" x2="289.20" y2="598.30" stroke="#9a9a9a" stroke-width="1.9" />
<line x1="293.20" y1="579.70" x2="293.20" y2="598.30" stroke="#9a9a9a" stroke-width="1.9" />
<line x1="297.20" y1="579.70" x2="297.20" y2="598.30" stroke="#9a9a9a" stroke-width="1.9" />
<text x="269.00" y="625.70" font-size="19.5" fill="#9a9a9a" stroke="#9a9a9a" stroke-width="0.45" textLength="39.60" lengthAdjust="spacingAndGlyphs" >Slice</text>
<text x="346.70" y="591.50" font-size="19.5" fill="#9b9b9b" stroke="#9b9b9b" stroke-width="0.45" textLength="43.00" >Gain</text>
<text x="350.50" y="621.40" font-size="19.5" fill="#7fd7f7" stroke="#7fd7f7" stroke-width="0.45" textLength="58.00" >2.8 dB</text>
<text x="438.50" y="591.50" font-size="19.5" fill="#9b9b9b" stroke="#9b9b9b" stroke-width="0.45" textLength="50.00" lengthAdjust="spacingAndGlyphs" >Start</text>
<text x="442.30" y="621.40" font-size="19.5" fill="#7fd7f7" stroke="#7fd7f7" stroke-width="0.45" textLength="62.00" >0.00 %</text>
<text x="529.30" y="591.50" font-size="19.5" fill="#9b9b9b" stroke="#9b9b9b" stroke-width="0.45" textLength="45.00" >Loop</text>
<text x="533.10" y="621.40" font-size="19.5" fill="#9b9b9b" stroke="#9b9b9b" stroke-width="0.45" textLength="55.00" >100 %</text>
<text x="619.00" y="591.50" font-size="19.5" fill="#9b9b9b" stroke="#9b9b9b" stroke-width="0.45" textLength="66.00" >Length</text>
<text x="622.80" y="621.40" font-size="19.5" fill="#7fd7f7" stroke="#7fd7f7" stroke-width="0.45" textLength="55.00" >100 %</text>
<text x="708.90" y="591.50" font-size="19.5" fill="#9b9b9b" stroke="#9b9b9b" stroke-width="0.45" textLength="45.00" >Fade</text>
<text x="712.70" y="621.40" font-size="19.5" fill="#9b9b9b" stroke="#9b9b9b" stroke-width="0.45" textLength="62.00" >0.00 %</text>
<rect x="798.60" y="576.80" width="74.60" height="20.00" fill="none" stroke="#7fd7f7" stroke-width="1.6" />
<text x="835.90" y="591.00" font-size="12.5" fill="#7fd7f7" stroke="#7fd7f7" stroke-width="0.55" text-anchor="middle" textLength="46.50" lengthAdjust="spacingAndGlyphs" class="wide" >LOOP</text>
<rect x="798.60" y="605.00" width="74.60" height="19.80" fill="none" stroke="#7fd7f7" stroke-width="1.6" />
<text x="835.90" y="619.20" font-size="12.5" fill="#7fd7f7" stroke="#7fd7f7" stroke-width="0.55" text-anchor="middle" textLength="46.50" lengthAdjust="spacingAndGlyphs" class="wide" >SNAP</text>
<text x="894.80" y="591.50" font-size="18.9" fill="#9b9b9b" stroke="#9b9b9b" stroke-width="0.45" textLength="62.00" >Voices</text>
<text x="900.30" y="621.40" font-size="18.9" fill="#7fd7f7" stroke="#7fd7f7" stroke-width="0.45" >6</text>
<path d="M935.6 614 H946.4 L941 620Z" fill="#7fd7f7" />
<text x="976.60" y="591.50" font-size="18.9" fill="#9b9b9b" stroke="#9b9b9b" stroke-width="0.45" textLength="59.00" lengthAdjust="spacingAndGlyphs" >Retrig</text>
<rect x="993.80" y="601.80" width="22.20" height="22.20" fill="#7fd7f7" />
<text x="1004.90" y="617.30" font-size="12.5" fill="#191919" font-weight="700" text-anchor="middle" textLength="10.50" lengthAdjust="spacingAndGlyphs" class="wide" >R</text>
<rect x="3144.80" y="576.90" width="106.30" height="19.90" fill="none" stroke="#f5b53f" stroke-width="1.8" />
<text x="3198.00" y="591.00" font-size="12.5" fill="#f5b53f" stroke="#f5b53f" stroke-width="0.55" text-anchor="middle" textLength="47.00" lengthAdjust="spacingAndGlyphs" class="wide" >WARP</text>
<text x="3266.60" y="592.70" font-size="18.9" fill="#9b9b9b" stroke="#9b9b9b" stroke-width="0.45" textLength="20.50" >as</text>
<rect x="3294.95" y="574.95" width="103.60" height="23.70" fill="none" rx="12" stroke="#4e4e4e" stroke-width="1.9" />
<text x="3318.70" y="593.30" font-size="18.9" fill="#f5b53f" font-weight="700" textLength="58.70" >2 Bars</text>
<rect x="3294.95" y="605.15" width="47.80" height="23.40" fill="none" rx="12" stroke="#4e4e4e" stroke-width="1.9" />
<text x="3318.80" y="623.40" font-size="18.9" fill="#9b9b9b" stroke="#9b9b9b" stroke-width="0.45" text-anchor="middle" >:2</text>
<rect x="3349.35" y="605.15" width="47.30" height="23.40" fill="none" rx="12" stroke="#4e4e4e" stroke-width="1.9" />
<text x="3373.00" y="623.40" font-size="18.9" fill="#9b9b9b" stroke="#9b9b9b" stroke-width="0.45" text-anchor="middle" >*2</text>
<text x="3148.80" y="623.40" font-size="18.9" fill="#9b9b9b" stroke="#9b9b9b" stroke-width="0.45" textLength="53.00" >Beats</text>
<path d="M3235.6 616 H3246.4 L3241 622Z" fill="#9b9b9b" />
<rect x="3379.50" y="537.05" width="10.00" height="6.00" fill="#191919" />
<circle cx="3393.00" cy="541.05" r="11.90" fill="#bdbdbd" stroke="#545454" stroke-width="2"/>
<path d="M3386.80 541.25 A6.3 6.3 0 0 1 3394.00 534.85" fill="none" stroke="#000" stroke-width="1.9" />
<path d="M3399.20 541.65 A6.3 6.3 0 0 1 3392.40 547.35" fill="none" stroke="#000" stroke-width="1.9" />
<path d="M3384.00 540.85 L3390.00 540.85 L3386.80 544.05Z" fill="#000" />
<path d="M3402.10 541.85 L3396.10 541.85 L3399.10 538.35Z" fill="#000" />
</g>
<circle cx="25.10" cy="636.90" r="19.10" fill="#505050"/>
<path d="M13.75 633.90 C15.8 630.80 17.8 628.60 20.2 628.60 C24 628.60 26.5 634.30 30.4 634.30 C33 634.30 35 632.60 36.4 629.50" fill="none" stroke="#8e8e8e" stroke-width="2.2" stroke-linecap="round"/>
<path d="M13.75 644.10 C15.8 641.00 17.8 638.80 20.2 638.80 C24 638.80 26.5 644.50 30.4 644.50 C33 644.50 35 642.80 36.4 639.70" fill="none" stroke="#8e8e8e" stroke-width="2.2" stroke-linecap="round"/>
<g id="device-rack">
<rect x="6.00" y="672.00" width="3422.00" height="392.00" fill="#464646" rx="9" />
<circle cx="20.80" cy="830.90" r="3.10" fill="#1f1f1f"/>
<circle cx="20.80" cy="838.91" r="3.10" fill="#1f1f1f"/>
<circle cx="20.80" cy="846.92" r="3.10" fill="#1f1f1f"/>
<circle cx="20.80" cy="854.93" r="3.10" fill="#1f1f1f"/>
<circle cx="20.80" cy="862.94" r="3.10" fill="#1f1f1f"/>
<circle cx="20.80" cy="870.95" r="3.10" fill="#1f1f1f"/>
<circle cx="20.80" cy="878.96" r="3.10" fill="#1f1f1f"/>
<circle cx="20.80" cy="886.97" r="3.10" fill="#1f1f1f"/>
<circle cx="20.80" cy="894.98" r="3.10" fill="#1f1f1f"/>
<circle cx="20.80" cy="902.99" r="3.10" fill="#1f1f1f"/>
</g>
<g id="simpler">
<clipPath id="dc36"><rect x="36" y="680" width="1436" height="376" rx="9"/></clipPath>
<g clip-path="url(#dc36)">
<rect x="36.00" y="680.00" width="1436.00" height="376.00" fill="#919191" />
<rect x="36.00" y="680.00" width="1436.00" height="34.00" fill="#c6e7f9" />
</g>
<circle cx="55.00" cy="696.90" r="11.95" fill="#f5b53f" stroke="#3c3c3c" stroke-width="1.7"/>
<circle cx="87.00" cy="696.90" r="11.95" fill="#bdbdbd" stroke="#3c3c3c" stroke-width="1.7"/>
<path d="M80 701.9 L94 701.9 L87 688.9Z" fill="#000" />
<text x="109.00" y="703.70" font-size="19.6" fill="#0a0a0a" font-weight="700" textLength="406.80" >Mahavishnu Orchestra - Planetary Citizen</text>
<line x1="523.90" y1="695.10" x2="530.50" y2="702.20" stroke="#3d79e2" stroke-width="2.8" stroke-linecap="round"/>
<line x1="527.25" y1="688.10" x2="531.00" y2="697.80" stroke="#3d79e2" stroke-width="2.7" stroke-linecap="round"/>
<line x1="532.50" y1="686.90" x2="532.70" y2="697.80" stroke="#3d79e2" stroke-width="2.7" stroke-linecap="round"/>
<line x1="536.80" y1="688.10" x2="535.40" y2="697.80" stroke="#3d79e2" stroke-width="2.6" stroke-linecap="round"/>
<line x1="541.10" y1="691.40" x2="537.60" y2="699.40" stroke="#3d79e2" stroke-width="2.5" stroke-linecap="round"/>
<path d="M529.1 696.6 L539.9 697.2 L538.9 703.2 L537.5 706.9 L530.4 706.9 L527.0 701.4Z" fill="#3d79e2" stroke="#3d79e2" stroke-width="0.6" stroke-linejoin="round"/>
<text x="1359.20" y="703.70" font-size="19.3" fill="#0a0a0a" stroke="#0a0a0a" stroke-width="0.45" textLength="40.40" lengthAdjust="spacingAndGlyphs" >MPE</text>
<circle cx="1420.90" cy="696.90" r="11.95" fill="#bdbdbd" stroke="#3c3c3c" stroke-width="1.7"/>
<path d="M1414.70 697.10 A6.3 6.3 0 0 1 1421.90 690.70" fill="none" stroke="#000" stroke-width="1.9" />
<path d="M1427.10 697.50 A6.3 6.3 0 0 1 1420.30 703.20" fill="none" stroke="#000" stroke-width="1.9" />
<path d="M1411.90 696.70 L1417.90 696.70 L1414.70 699.90Z" fill="#000" />
<path d="M1430.00 697.70 L1424.00 697.70 L1427.00 694.20Z" fill="#000" />
<circle cx="1452.80" cy="696.90" r="11.95" fill="#bdbdbd" stroke="#3c3c3c" stroke-width="1.7"/>
<path d="M1446.20 690.20 H1456.90 L1459.80 693.20 V703.70 H1446.20Z" fill="#000" />
<rect x="1450.00" y="692.10" width="5.80" height="3.80" fill="#bdbdbd" />
<rect x="42.00" y="718.00" width="524.00" height="258.00" fill="#191919" rx="6" />
<line x1="69.09" y1="720.00" x2="69.09" y2="940.00" stroke="#363636" stroke-width="1.8" />
<line x1="86.55" y1="720.00" x2="86.55" y2="940.00" stroke="#363636" stroke-width="1.8" />
<line x1="100.82" y1="720.00" x2="100.82" y2="940.00" stroke="#363636" stroke-width="1.8" />
<line x1="112.89" y1="720.00" x2="112.89" y2="940.00" stroke="#363636" stroke-width="1.8" />
<line x1="123.34" y1="720.00" x2="123.34" y2="940.00" stroke="#363636" stroke-width="1.8" />
<line x1="132.55" y1="720.00" x2="132.55" y2="940.00" stroke="#363636" stroke-width="1.8" />
<line x1="140.80" y1="720.00" x2="140.80" y2="940.00" stroke="#484848" stroke-width="1.8" />
<line x1="195.05" y1="720.00" x2="195.05" y2="940.00" stroke="#363636" stroke-width="1.8" />
<line x1="226.78" y1="720.00" x2="226.78" y2="940.00" stroke="#363636" stroke-width="1.8" />
<line x1="249.29" y1="720.00" x2="249.29" y2="940.00" stroke="#363636" stroke-width="1.8" />
<line x1="266.75" y1="720.00" x2="266.75" y2="940.00" stroke="#363636" stroke-width="1.8" />
<line x1="281.02" y1="720.00" x2="281.02" y2="940.00" stroke="#363636" stroke-width="1.8" />
<line x1="293.09" y1="720.00" x2="293.09" y2="940.00" stroke="#363636" stroke-width="1.8" />
<line x1="303.54" y1="720.00" x2="303.54" y2="940.00" stroke="#363636" stroke-width="1.8" />
<line x1="312.75" y1="720.00" x2="312.75" y2="940.00" stroke="#363636" stroke-width="1.8" />
<line x1="321.00" y1="720.00" x2="321.00" y2="940.00" stroke="#484848" stroke-width="1.8" />
<line x1="375.25" y1="720.00" x2="375.25" y2="940.00" stroke="#363636" stroke-width="1.8" />
<line x1="406.98" y1="720.00" x2="406.98" y2="940.00" stroke="#363636" stroke-width="1.8" />
<line x1="429.49" y1="720.00" x2="429.49" y2="940.00" stroke="#363636" stroke-width="1.8" />
<line x1="446.95" y1="720.00" x2="446.95" y2="940.00" stroke="#363636" stroke-width="1.8" />
<line x1="461.22" y1="720.00" x2="461.22" y2="940.00" stroke="#363636" stroke-width="1.8" />
<line x1="473.29" y1="720.00" x2="473.29" y2="940.00" stroke="#363636" stroke-width="1.8" />
<line x1="483.74" y1="720.00" x2="483.74" y2="940.00" stroke="#363636" stroke-width="1.8" />
<line x1="492.95" y1="720.00" x2="492.95" y2="940.00" stroke="#363636" stroke-width="1.8" />
<line x1="501.20" y1="720.00" x2="501.20" y2="940.00" stroke="#484848" stroke-width="1.8" />
<line x1="555.45" y1="720.00" x2="555.45" y2="940.00" stroke="#363636" stroke-width="1.8" />
<line x1="45.80" y1="745.00" x2="561.70" y2="745.00" stroke="#363636" stroke-width="1.8" />
<line x1="45.80" y1="773.20" x2="561.70" y2="773.20" stroke="#363636" stroke-width="1.8" />
<line x1="45.80" y1="801.40" x2="561.70" y2="801.40" stroke="#363636" stroke-width="1.8" />
<line x1="45.80" y1="829.60" x2="561.70" y2="829.60" stroke="#424242" stroke-width="1.8" />
<line x1="45.80" y1="857.80" x2="561.70" y2="857.80" stroke="#363636" stroke-width="1.8" />
<line x1="45.80" y1="886.00" x2="561.70" y2="886.00" stroke="#363636" stroke-width="1.8" />
<line x1="45.80" y1="914.20" x2="561.70" y2="914.20" stroke="#363636" stroke-width="1.8" />
<text x="123.20" y="935.40" font-size="18.9" fill="#727272" stroke="#727272" stroke-width="0.45" textLength="34.00" >100</text>
<text x="308.50" y="935.40" font-size="18.9" fill="#727272" stroke="#727272" stroke-width="0.45" textLength="21.50" >1k</text>
<text x="481.00" y="935.40" font-size="18.9" fill="#727272" stroke="#727272" stroke-width="0.45" textLength="33.50" >10k</text>
<path d="M196.80 940.00 C199.83 933.17 209.13 912.17 215.00 899.00 C220.87 885.83 227.33 871.17 232.00 861.00 C236.67 850.83 240.00 843.83 243.00 838.00 C246.00 832.17 247.83 829.25 250.00 826.00 C252.17 822.75 254.00 820.47 256.00 818.50 C258.00 816.53 260.00 815.23 262.00 814.20 C264.00 813.17 266.00 812.63 268.00 812.30 C270.00 811.97 271.67 812.02 274.00 812.20 C276.33 812.38 278.50 812.68 282.00 813.40 C285.50 814.12 290.33 815.40 295.00 816.50 C299.67 817.60 304.17 818.82 310.00 820.00 C315.83 821.18 322.50 822.55 330.00 823.60 C337.50 824.65 345.00 825.50 355.00 826.30 C365.00 827.10 377.50 827.88 390.00 828.40 C402.50 828.92 415.00 829.15 430.00 829.40 C445.00 829.65 458.05 829.78 480.00 829.90 C501.95 830.02 548.08 830.07 561.70 830.10" fill="none" stroke="#80d8f6" stroke-width="3" stroke-linejoin="round"/>
<circle cx="257.30" cy="866.80" r="11.20" fill="none" stroke="#f5b53f" stroke-width="2.6"/>
<rect x="54.10" y="952.00" width="14.00" height="14.00" fill="#80d8f6" />
<text x="76.80" y="965.30" font-size="18.9" fill="#9b9b9b" stroke="#9b9b9b" stroke-width="0.45" textLength="101.00" lengthAdjust="spacingAndGlyphs" >Frequency</text>
<rect x="188.95" y="952.85" width="12.10" height="12.30" fill="none" stroke="#80d8f6" stroke-width="1.7" />
<text x="211.30" y="965.30" font-size="18.9" fill="#9b9b9b" stroke="#9b9b9b" stroke-width="0.45" textLength="86.40" >Envelope</text>
<text x="340.70" y="965.30" font-size="18.9" fill="#9b9b9b" stroke="#9b9b9b" stroke-width="0.45" textLength="26.00" >Vel</text>
<text x="378.00" y="965.30" font-size="18.9" fill="#80d8f6" stroke="#80d8f6" stroke-width="0.45" textLength="50.50" >0.0 %</text>
<text x="449.00" y="965.30" font-size="18.9" fill="#9b9b9b" stroke="#9b9b9b" stroke-width="0.45" textLength="33.60" >Key</text>
<text x="492.90" y="965.30" font-size="18.9" fill="#80d8f6" stroke="#80d8f6" stroke-width="0.45" textLength="55.90" >100 %</text>
<rect x="46.00" y="984.00" width="26.00" height="26.00" fill="#f5b53f" />
<rect x="47.00" y="985.00" width="24.00" height="24.00" fill="none" stroke="#474849" stroke-width="2" />
<text x="85.00" y="1003.20" font-size="19.6" fill="#0f0f0f" font-weight="700" textLength="51.00" >Filter</text>
<rect x="142.00" y="984.00" width="80.00" height="25.00" fill="#dcdcdc" />
<rect x="143.00" y="985.00" width="78.00" height="23.00" fill="none" stroke="#474849" stroke-width="2" />
<path d="M149.5 1004.5 V998 Q149.5 990.6 157.5 990.6 H178" fill="none" stroke="#0f0f0f" stroke-width="1.8" />
<path d="M204.75 992.25 H217.25 L211.00 1001.75Z" fill="#0f0f0f" />
<rect x="46.00" y="1020.00" width="38.00" height="26.00" fill="#bebebe" />
<rect x="47.00" y="1021.00" width="36.00" height="24.00" fill="none" stroke="#474849" stroke-width="2" />
<text x="55.00" y="1039.90" font-size="19.3" fill="#0f0f0f" stroke="#0f0f0f" stroke-width="0.45" textLength="22.00" >12</text>
<rect x="90.00" y="1020.00" width="38.00" height="26.00" fill="#f5b53f" />
<rect x="91.00" y="1021.00" width="36.00" height="24.00" fill="none" stroke="#474849" stroke-width="2" />
<text x="98.60" y="1039.90" font-size="19.3" fill="#0f0f0f" stroke="#0f0f0f" stroke-width="0.45" textLength="22.40" >24</text>
<rect x="142.00" y="1020.00" width="80.00" height="26.00" fill="#dcdcdc" />
<rect x="143.00" y="1021.00" width="78.00" height="24.00" fill="none" stroke="#474849" stroke-width="2" />
<text x="146.60" y="1039.90" font-size="19.3" fill="#0f0f0f" stroke="#0f0f0f" stroke-width="0.45" textLength="52.90" >Clean</text>
<path d="M204.75 1028.25 H217.25 L211.00 1037.75Z" fill="#0f0f0f" />
<text x="239.20" y="997.90" font-size="19.3" fill="#0f0f0f" stroke="#0f0f0f" stroke-width="0.45" textLength="101.00" >Frequency</text>
<text x="353.10" y="997.90" font-size="19.3" fill="#0f0f0f" stroke="#0f0f0f" stroke-width="0.45" textLength="33.00" lengthAdjust="spacingAndGlyphs" >Res</text>
<path d="M257.00 1043.90 A16.8 16.8 0 0 1 241.21 1021.35" fill="none" stroke="#80d8f6" stroke-width="4" stroke-linecap="butt"/>
<path d="M242.75 1018.20 A16.8 16.8 0 0 1 273.80 1027.10" fill="none" stroke="#1e1e1e" stroke-width="4" stroke-linecap="butt"/>
<line x1="256.06" y1="1026.76" x2="240.93" y2="1021.25" stroke="#1e1e1e" stroke-width="4.4" stroke-linecap="round"/>
<text x="264.70" y="1049.60" font-size="19.3" fill="#0f0f0f" stroke="#0f0f0f" stroke-width="0.45" textLength="63.90" >431 Hz</text>
<path d="M371.10 1043.90 A16.8 16.8 0 0 1 354.46 1029.44" fill="none" stroke="#80d8f6" stroke-width="4" stroke-linecap="butt"/>
<path d="M354.34 1025.93 A16.8 16.8 0 0 1 387.90 1027.10" fill="none" stroke="#1e1e1e" stroke-width="4" stroke-linecap="butt"/>
<line x1="370.11" y1="1027.24" x2="354.17" y2="1029.48" stroke="#1e1e1e" stroke-width="4.4" stroke-linecap="round"/>
<text x="378.90" y="1049.60" font-size="19.3" fill="#0f0f0f" stroke="#0f0f0f" stroke-width="0.45" textLength="43.50" >39 %</text>
<line x1="569.00" y1="978.00" x2="569.00" y2="1054.00" stroke="#747474" stroke-width="2" />
<line x1="861.00" y1="978.00" x2="861.00" y2="1054.00" stroke="#747474" stroke-width="2" />
<rect x="570.00" y="718.00" width="290.00" height="258.00" fill="#191919" rx="6" />
<text x="578.30" y="745.80" font-size="18.9" fill="#9b9b9b" stroke="#9b9b9b" stroke-width="0.45" textLength="64.00" lengthAdjust="spacingAndGlyphs" >Attack</text>
<text x="654.60" y="745.80" font-size="18.9" fill="#f5b53f" stroke="#f5b53f" stroke-width="0.45" textLength="73.00" >0.10 ms</text>
<text x="738.90" y="745.80" font-size="18.9" fill="#9b9b9b" stroke="#9b9b9b" stroke-width="0.45" textLength="33.50" >Key</text>
<text x="784.30" y="745.80" font-size="18.9" fill="#f5b53f" stroke="#f5b53f" stroke-width="0.45" textLength="50.50" >0.0 %</text>
<text x="578.30" y="779.70" font-size="18.9" fill="#9b9b9b" stroke="#9b9b9b" stroke-width="0.45" textLength="61.50" lengthAdjust="spacingAndGlyphs" >Offset</text>
<text x="654.60" y="779.70" font-size="18.9" fill="#f5b53f" stroke="#f5b53f" stroke-width="0.45" textLength="48.50" >0.00°</text>
<rect x="737.90" y="762.00" width="22.20" height="22.20" fill="#f5b53f" />
<text x="749.00" y="777.50" font-size="12.5" fill="#191919" font-weight="700" text-anchor="middle" textLength="10.50" lengthAdjust="spacingAndGlyphs" class="wide" >R</text>
<path d="M582.3 849.2 L584.3 842.3 L586.3 835.6 L588.3 829.2 L590.3 823.3 L592.3 818.0 L594.3 813.4 L596.3 809.7 L598.3 807.0 L600.3 805.2 L602.3 804.5 L604.3 804.9 L606.3 806.3 L608.3 808.8 L610.3 812.2 L612.3 816.5 L614.3 821.6 L616.3 827.4 L618.3 833.6 L620.3 840.3 L622.3 847.1 L624.3 854.0 L626.3 860.8 L628.3 867.3 L630.3 873.4 L632.3 878.9 L634.3 883.7 L636.3 887.7 L638.3 890.7 L640.3 892.8 L642.3 893.8 L644.3 893.7 L646.3 892.6 L648.3 890.5 L650.3 887.3 L652.3 883.3 L654.3 878.4 L656.3 872.8 L658.3 866.7 L660.3 860.2 L662.3 853.3 L664.3 846.4 L666.3 839.6 L668.3 833.0 L670.3 826.8 L672.3 821.1 L674.3 816.0 L676.3 811.8 L678.3 808.5 L680.3 806.1 L682.3 804.8 L684.3 804.5 L686.3 805.3 L688.3 807.2 L690.3 810.0 L692.3 813.8 L694.3 818.5 L696.3 823.8 L698.3 829.8 L700.3 836.2 L702.3 843.0 L704.3 849.9 L706.3 856.8 L708.3 863.5 L710.3 869.8 L712.3 875.7 L714.3 880.9 L716.3 885.4 L718.3 889.0 L720.3 891.7 L722.3 893.3 L724.3 893.9 L726.3 893.4 L728.3 891.9 L730.3 889.3 L732.3 885.8 L734.3 881.4 L736.3 876.3 L738.3 870.4 L740.3 864.1 L742.3 857.5 L744.3 850.6 L746.3 843.7 L748.3 836.9 L750.3 830.4 L752.3 824.4 L754.3 819.0 L756.3 814.3 L758.3 810.4 L760.3 807.4 L762.3 805.5 L764.3 804.6 L766.3 804.7 L768.3 805.9 L770.3 808.2 L772.3 811.4 L774.3 815.6 L776.3 820.5 L778.3 826.2 L780.3 832.3 L782.3 838.9 L784.3 845.7 L786.3 852.7 L788.3 859.5 L790.3 866.1 L792.3 872.2 L794.3 877.9 L796.3 882.8 L798.3 887.0 L800.3 890.2 L802.3 892.5 L804.3 893.7 L806.3 893.8 L808.3 892.9 L810.3 891.0 L812.3 888.0 L814.3 884.1 L816.3 879.4 L818.3 874.0 L820.3 868.0 L822.3 861.5 L824.3 854.7 L826.3 847.8 L828.3 840.9 L830.3 834.3 L832.3 828.0 L834.3 822.1 L836.3 817.0 L838.3 812.6 L840.3 809.1 L842.3 806.5 L844.3 805.0 L846.3 804.5 L848.3 805.1" fill="none" stroke="#80d8f6" stroke-width="3" stroke-linejoin="round"/>
<text x="579.00" y="931.50" font-size="18.9" fill="#9b9b9b" stroke="#9b9b9b" stroke-width="0.45" textLength="27.80" >Vol</text>
<text x="624.30" y="931.50" font-size="18.9" fill="#80d8f6" stroke="#80d8f6" stroke-width="0.45" textLength="62.40" >0.00 %</text>
<text x="706.80" y="931.50" font-size="18.9" fill="#9b9b9b" stroke="#9b9b9b" stroke-width="0.45" textLength="49.00" lengthAdjust="spacingAndGlyphs" >Pitch</text>
<text x="768.50" y="931.50" font-size="18.9" fill="#80d8f6" stroke="#80d8f6" stroke-width="0.45" textLength="61.90" >0.00 %</text>
<text x="579.00" y="965.80" font-size="18.9" fill="#9b9b9b" stroke="#9b9b9b" stroke-width="0.45" textLength="34.50" >Pan</text>
<text x="626.60" y="965.80" font-size="18.9" fill="#80d8f6" stroke="#80d8f6" stroke-width="0.45" textLength="62.00" >0.00 %</text>
<text x="706.80" y="965.80" font-size="18.9" fill="#9b9b9b" stroke="#9b9b9b" stroke-width="0.45" textLength="51.00" lengthAdjust="spacingAndGlyphs" >Filter</text>
<text x="770.30" y="965.80" font-size="18.9" fill="#80d8f6" stroke="#80d8f6" stroke-width="0.45" textLength="40.50" >0.00</text>
<rect x="604.00" y="986.00" width="26.00" height="26.00" fill="#f5b53f" />
<rect x="605.00" y="987.00" width="24.00" height="24.00" fill="none" stroke="#474849" stroke-width="2" />
<text x="639.00" y="1005.80" font-size="19.6" fill="#0f0f0f" font-weight="700" textLength="34.80" lengthAdjust="spacingAndGlyphs" >LFO</text>
<rect x="718.00" y="986.00" width="48.00" height="26.00" fill="#f5b53f" />
<rect x="719.00" y="987.00" width="46.00" height="24.00" fill="none" stroke="#474849" stroke-width="2" />
<text x="729.90" y="1005.70" font-size="19.3" fill="#0f0f0f" stroke="#0f0f0f" stroke-width="0.45" textLength="22.10" lengthAdjust="spacingAndGlyphs" >Hz</text>
<rect x="774.00" y="986.00" width="48.00" height="26.00" fill="#bdbdbd" />
<rect x="775.00" y="987.00" width="46.00" height="24.00" fill="none" stroke="#474849" stroke-width="2" />
<text x="797.50" y="1005.50" font-size="20" fill="#0f0f0f" text-anchor="middle" font-family="DejaVu Sans">♪</text>
<rect x="604.00" y="1020.00" width="86.00" height="26.00" fill="#dcdcdc" />
<rect x="605.00" y="1021.00" width="84.00" height="24.00" fill="none" stroke="#474849" stroke-width="2" />
<path d="M610.4 1037.8 C613.5 1030 616.5 1025.3 620.4 1025.3 C624.5 1025.3 626.5 1039.9 631.4 1039.9 C635 1039.9 637.5 1033 639.3 1027.9" fill="none" stroke="#0f0f0f" stroke-width="2" />
<path d="M672.80 1028.10 H685.40 L679.10 1037.30Z" fill="#0f0f0f" />
<rect x="718.00" y="1020.00" width="104.00" height="26.00" fill="#dcdcdc" />
<rect x="718.00" y="1020.00" width="60.00" height="26.00" fill="#84daf5" />
<rect x="719.00" y="1021.00" width="102.00" height="24.00" fill="none" stroke="#474849" stroke-width="2" />
<text x="735.20" y="1039.50" font-size="19.3" fill="#0f0f0f" stroke="#0f0f0f" stroke-width="0.45" textLength="38.80" >1.00</text>
<text x="781.80" y="1039.50" font-size="19.3" fill="#0f0f0f" stroke="#0f0f0f" stroke-width="0.45" textLength="22.60" lengthAdjust="spacingAndGlyphs" >Hz</text>
<rect x="864.00" y="718.00" width="602.00" height="258.00" fill="#191919" rx="6" />
<text x="900.80" y="742.00" font-size="18.9" fill="#9b9b9b" stroke="#9b9b9b" stroke-width="0.45" textLength="192.50" lengthAdjust="spacingAndGlyphs" >Amplitude Envelope</text>
<line x1="1143.00" y1="722.70" x2="1143.00" y2="745.30" stroke="#545454" stroke-width="2" />
<text x="1151.00" y="742.00" font-size="18.9" fill="#9b9b9b" stroke="#9b9b9b" stroke-width="0.45" textLength="45.80" >Time</text>
<text x="1211.00" y="742.00" font-size="18.9" fill="#9b9b9b" stroke="#9b9b9b" stroke-width="0.45" textLength="66.40" >100 ms</text>
<text x="1299.00" y="742.00" font-size="18.9" fill="#9b9b9b" stroke="#9b9b9b" stroke-width="0.45" textLength="52.70" >Mode</text>
<text x="1365.40" y="742.00" font-size="18.9" fill="#f5b53f" font-weight="700" textLength="49.00" >None</text>
<path d="M1433.60 733.80 H1444.40 L1439.00 740.20Z" fill="#f5b53f" />
<line x1="872.00" y1="753.00" x2="1462.00" y2="753.00" stroke="#545454" stroke-width="2" />
<path d="M872.3 775.5 V758.4 H889.5" fill="none" stroke="#80d8f6" stroke-width="1.6" />
<path d="M1444.8 758.4 H1462 V775.5" fill="none" stroke="#80d8f6" stroke-width="1.6" />
<path d="M872.3 866 V883.2 H889.5" fill="none" stroke="#80d8f6" stroke-width="1.6" />
<path d="M1444.8 883.2 H1462 V866" fill="none" stroke="#80d8f6" stroke-width="1.6" />
<path d="M883.2 884.0 L883.2 769.0 L1263.2 769.0 L1265.7 782.6 L1268.2 794.5 L1270.7 804.8 L1273.2 813.8 L1275.7 821.6 L1278.2 828.4 L1280.7 834.3 L1283.2 839.4 L1285.7 843.9 L1288.2 847.8 L1290.7 851.2 L1293.2 854.2 L1295.7 856.7 L1298.2 859.0 L1300.7 860.9 L1303.2 862.6 L1305.7 864.1 L1308.2 865.4 L1310.7 866.5 L1313.2 867.5 L1315.7 868.3 L1318.2 869.1 L1320.7 869.7 L1323.2 870.3 L1325.7 870.7 L1328.2 871.2 L1330.7 871.5 L1333.2 871.9 L1335.7 872.1 L1338.2 872.4 L1340.7 872.6 L1343.2 872.8 L1345.7 872.9 L1348.2 873.1 L1350.7 873.2 L1353.2 873.3 L1355.7 873.4 L1358.2 873.5 L1360.7 873.5 L1363.2 873.6 L1365.7 873.6 L1368.2 873.7 L1370.7 873.7 L1373.2 873.8 L1375.7 873.8 L1378.2 873.8" fill="none" stroke="#80d8f6" stroke-width="2.8" stroke-linejoin="round"/>
<rect x="876.80" y="763.00" width="10.40" height="10.40" fill="none" stroke="#f5b53f" stroke-width="1.8" />
<rect x="986.80" y="763.00" width="10.40" height="10.40" fill="none" stroke="#f5b53f" stroke-width="1.8" />
<rect x="1372.10" y="868.40" width="10.40" height="10.40" fill="none" stroke="#f5b53f" stroke-width="1.8" />
<rect x="872.10" y="892.00" width="14.00" height="14.00" fill="#80d8f6" />
<text x="894.80" y="905.80" font-size="18.9" fill="#9b9b9b" stroke="#9b9b9b" stroke-width="0.45" textLength="99.20" lengthAdjust="spacingAndGlyphs" >Amplitude</text>
<rect x="1173.35" y="892.85" width="12.10" height="12.30" fill="none" stroke="#80d8f6" stroke-width="1.7" />
<text x="1195.50" y="905.80" font-size="18.9" fill="#9b9b9b" stroke="#9b9b9b" stroke-width="0.45" textLength="48.50" lengthAdjust="spacingAndGlyphs" >Pitch</text>
<line x1="872.00" y1="911.00" x2="1167.40" y2="911.00" stroke="#545454" stroke-width="2" />
<line x1="1172.50" y1="911.00" x2="1462.00" y2="911.00" stroke="#545454" stroke-width="2" />
<text x="875.20" y="935.40" font-size="18.9" fill="#9b9b9b" stroke="#9b9b9b" stroke-width="0.45" textLength="34.50" >Pan</text>
<text x="946.10" y="935.40" font-size="18.9" fill="#80d8f6" stroke="#80d8f6" stroke-width="0.45" textLength="13.00" lengthAdjust="spacingAndGlyphs" >C</text>
<text x="1017.00" y="935.40" font-size="18.9" fill="#9b9b9b" stroke="#9b9b9b" stroke-width="0.45" textLength="83.20" >Ran&gt;Pan</text>
<text x="1110.50" y="935.40" font-size="18.9" fill="#80d8f6" stroke="#80d8f6" stroke-width="0.45" textLength="50.80" >0.0 %</text>
<text x="875.20" y="965.30" font-size="18.9" fill="#9b9b9b" stroke="#9b9b9b" stroke-width="0.45" textLength="67.00" >Spread</text>
<text x="952.00" y="965.30" font-size="18.9" fill="#80d8f6" stroke="#80d8f6" stroke-width="0.45" textLength="32.70" >0 %</text>
<text x="1017.00" y="965.30" font-size="18.9" fill="#9b9b9b" stroke="#9b9b9b" stroke-width="0.45" textLength="69.50" >Vel&gt;Vol</text>
<text x="1108.70" y="965.30" font-size="18.9" fill="#80d8f6" stroke="#80d8f6" stroke-width="0.45" textLength="43.90" >35 %</text>
<text x="1175.00" y="935.40" font-size="18.9" fill="#9b9b9b" stroke="#9b9b9b" stroke-width="0.45" textLength="65.40" lengthAdjust="spacingAndGlyphs" >Transp</text>
<text x="1250.70" y="935.40" font-size="18.9" fill="#f5b53f" stroke="#f5b53f" stroke-width="0.45" textLength="34.20" lengthAdjust="spacingAndGlyphs" >0 st</text>
<text x="1175.00" y="965.30" font-size="18.9" fill="#9b9b9b" stroke="#9b9b9b" stroke-width="0.45" textLength="72.00" lengthAdjust="spacingAndGlyphs" >Detune</text>
<text x="1254.70" y="965.30" font-size="18.9" fill="#f5b53f" stroke="#f5b53f" stroke-width="0.45" textLength="35.80" lengthAdjust="spacingAndGlyphs" >0 ct</text>
<text x="1323.20" y="935.40" font-size="18.9" fill="#9b9b9b" stroke="#9b9b9b" stroke-width="0.45" textLength="48.00" >Glide</text>
<text x="1382.40" y="935.40" font-size="18.9" fill="#f5b53f" font-weight="700" textLength="31.20" lengthAdjust="spacingAndGlyphs" >Off</text>
<path d="M1443.40 928.00 H1454.20 L1448.80 934.40Z" fill="#f5b53f" />
<text x="1323.20" y="965.30" font-size="18.9" fill="#9b9b9b" stroke="#9b9b9b" stroke-width="0.45" textLength="44.80" >Time</text>
<text x="1379.40" y="965.30" font-size="18.9" fill="#9b9b9b" stroke="#9b9b9b" stroke-width="0.45" textLength="72.00" >50.0 ms</text>
<text x="878.60" y="997.90" font-size="19.3" fill="#0f0f0f" stroke="#0f0f0f" stroke-width="0.45" textLength="64.40" lengthAdjust="spacingAndGlyphs" >Attack</text>
<path d="M893.51 1043.53 A16.8 16.8 0 1 1 913.80 1027.10" fill="none" stroke="#1e1e1e" stroke-width="4" stroke-linecap="butt"/>
<line x1="897.00" y1="1028.10" x2="897.00" y2="1044.20" stroke="#1e1e1e" stroke-width="4.4" stroke-linecap="round"/>
<text x="905.10" y="1049.70" font-size="19.3" fill="#0f0f0f" stroke="#0f0f0f" stroke-width="0.45" textLength="72.20" >0.00 ms</text>
<text x="999.20" y="997.90" font-size="19.3" fill="#0f0f0f" stroke="#0f0f0f" stroke-width="0.45" textLength="57.20" >Decay</text>
<path d="M1017.00 1043.90 A16.8 16.8 0 0 1 1009.90 1011.87" fill="none" stroke="#80d8f6" stroke-width="4" stroke-linecap="butt"/>
<path d="M1013.22 1010.73 A16.8 16.8 0 0 1 1033.80 1027.10" fill="none" stroke="#1e1e1e" stroke-width="4" stroke-linecap="butt"/>
<line x1="1016.58" y1="1026.19" x2="1009.77" y2="1011.60" stroke="#1e1e1e" stroke-width="4.4" stroke-linecap="round"/>
<text x="1025.00" y="1049.70" font-size="19.3" fill="#0f0f0f" stroke="#0f0f0f" stroke-width="0.45" textLength="65.70" >600 ms</text>
<text x="1118.90" y="997.90" font-size="19.3" fill="#0f0f0f" stroke="#0f0f0f" stroke-width="0.45" textLength="70.50" >Sustain</text>
<path d="M1137.30 1043.90 A16.8 16.8 0 1 1 1154.10 1027.10" fill="none" stroke="#80d8f6" stroke-width="4" stroke-linecap="butt"/>
<line x1="1138.30" y1="1027.10" x2="1154.40" y2="1027.10" stroke="#1e1e1e" stroke-width="4.4" stroke-linecap="round"/>
<text x="1144.90" y="1049.70" font-size="19.3" fill="#0f0f0f" stroke="#0f0f0f" stroke-width="0.45" textLength="58.30" >0.0 dB</text>
<text x="1238.90" y="997.90" font-size="19.3" fill="#0f0f0f" stroke="#0f0f0f" stroke-width="0.45" textLength="73.10" >Release</text>
<path d="M1256.80 1043.90 A16.8 16.8 0 0 1 1251.61 1011.12" fill="none" stroke="#80d8f6" stroke-width="4" stroke-linecap="butt"/>
<path d="M1255.04 1010.39 A16.8 16.8 0 0 1 1273.60 1027.10" fill="none" stroke="#1e1e1e" stroke-width="4" stroke-linecap="butt"/>
<line x1="1256.49" y1="1026.15" x2="1251.52" y2="1010.84" stroke="#1e1e1e" stroke-width="4.4" stroke-linecap="round"/>
<text x="1264.50" y="1049.70" font-size="19.3" fill="#0f0f0f" stroke="#0f0f0f" stroke-width="0.45" textLength="66.30" >832 ms</text>
<text x="1359.00" y="997.90" font-size="19.3" fill="#0f0f0f" stroke="#0f0f0f" stroke-width="0.45" textLength="69.40" >Volume</text>
<path d="M1377.30 1043.90 A16.8 16.8 0 0 1 1360.50 1027.10" fill="none" stroke="#80d8f6" stroke-width="4" stroke-linecap="butt"/>
<path d="M1360.87 1023.61 A16.8 16.8 0 0 1 1394.10 1027.10" fill="none" stroke="#1e1e1e" stroke-width="4" stroke-linecap="butt"/>
<line x1="1376.30" y1="1027.10" x2="1360.20" y2="1027.10" stroke="#1e1e1e" stroke-width="4.4" stroke-linecap="round"/>
<text x="1384.50" y="1049.70" font-size="19.3" fill="#0f0f0f" stroke="#0f0f0f" stroke-width="0.45" textLength="78.10" >-12.0 dB</text>
</g>
<rect x="1478.00" y="828.00" width="4.20" height="80.00" fill="#262626" />
<rect x="1478.00" y="835.60" width="4.20" height="2.20" fill="#8c8c8c" />
<rect x="1483.90" y="828.00" width="4.20" height="80.00" fill="#262626" />
<rect x="1483.90" y="835.60" width="4.20" height="2.20" fill="#8c8c8c" />
<g id="utility">
<clipPath id="dc1494"><rect x="1494" y="680" width="278" height="376" rx="9"/></clipPath>
<g clip-path="url(#dc1494)">
<rect x="1494.00" y="680.00" width="278.00" height="376.00" fill="#919191" />
<rect x="1494.00" y="680.00" width="278.00" height="34.00" fill="#aaaaaa" />
</g>
<circle cx="1513.00" cy="696.90" r="11.95" fill="#f5b53f" stroke="#3c3c3c" stroke-width="1.7"/>
<text x="1535.10" y="703.70" font-size="19.6" fill="#0a0a0a" font-weight="700" textLength="58.70" >Utility</text>
<circle cx="1721.00" cy="696.90" r="11.95" fill="#aaaaaa" stroke="#3c3c3c" stroke-width="1.7"/>
<path d="M1714.80 697.10 A6.3 6.3 0 0 1 1722.00 690.70" fill="none" stroke="#000" stroke-width="1.9" />
<path d="M1727.20 697.50 A6.3 6.3 0 0 1 1720.40 703.20" fill="none" stroke="#000" stroke-width="1.9" />
<path d="M1712.00 696.70 L1718.00 696.70 L1714.80 699.90Z" fill="#000" />
<path d="M1730.10 697.70 L1724.10 697.70 L1727.10 694.20Z" fill="#000" />
<circle cx="1753.20" cy="696.90" r="11.95" fill="#aaaaaa" stroke="#3c3c3c" stroke-width="1.7"/>
<path d="M1746.60 690.20 H1757.30 L1760.20 693.20 V703.70 H1746.60Z" fill="#000" />
<rect x="1750.40" y="692.10" width="5.80" height="3.80" fill="#aaaaaa" />
<text x="1537.30" y="739.60" font-size="19.6" fill="#0f0f0f" font-weight="700" textLength="51.60" >Input</text>
<text x="1668.70" y="739.60" font-size="19.6" fill="#0f0f0f" font-weight="700" textLength="70.10" >Output</text>
<line x1="1633.00" y1="722.00" x2="1633.00" y2="869.40" stroke="#5c5c5c" stroke-width="2" />
<line x1="1633.00" y1="896.30" x2="1633.00" y2="1043.70" stroke="#5c5c5c" stroke-width="2" />
<path d="M1630 875.6 L1638.2 882.9 L1630 890.2Z" fill="#5c5c5c" />
<rect x="1506.00" y="752.00" width="54.00" height="26.00" fill="#f5b53f" />
<rect x="1507.00" y="753.00" width="52.00" height="24.00" fill="none" stroke="#474849" stroke-width="2" />
<text x="1518.50" y="772.00" font-size="19.3" fill="#0f0f0f" stroke="#0f0f0f" stroke-width="0.45" textLength="29.50" lengthAdjust="spacingAndGlyphs" >Ø L</text>
<rect x="1566.00" y="752.00" width="54.00" height="26.00" fill="#bebebe" />
<rect x="1567.00" y="753.00" width="52.00" height="24.00" fill="none" stroke="#474849" stroke-width="2" />
<text x="1577.00" y="772.00" font-size="19.3" fill="#0f0f0f" stroke="#0f0f0f" stroke-width="0.45" textLength="31.50" lengthAdjust="spacingAndGlyphs" >Ø R</text>
<rect x="1506.00" y="785.00" width="114.00" height="25.00" fill="#dcdcdc" />
<rect x="1507.00" y="786.00" width="112.00" height="23.00" fill="none" stroke="#474849" stroke-width="2" />
<text x="1510.80" y="803.30" font-size="19.3" fill="#0f0f0f" stroke="#0f0f0f" stroke-width="0.45" textLength="63.20" >Stereo</text>
<path d="M1603.15 792.25 H1615.65 L1609.40 801.75Z" fill="#0f0f0f" />
<text x="1535.10" y="841.20" font-size="19.3" fill="#0f0f0f" stroke="#0f0f0f" stroke-width="0.45" textLength="57.50" lengthAdjust="spacingAndGlyphs" >Width</text>
<path d="M1550.23 905.27 A23.9 23.9 0 0 1 1558.75 861.46" fill="none" stroke="#1e1e1e" stroke-width="4.4" stroke-linecap="butt"/>
<path d="M1567.05 861.46 A23.9 23.9 0 0 1 1575.57 905.27" fill="none" stroke="#1e1e1e" stroke-width="4.4" stroke-linecap="butt"/>
<path d="M1555.50 848.20 H1570.30 L1562.90 856.50Z" fill="#1e1e1e" />
<line x1="1562.90" y1="884.50" x2="1562.90" y2="861.60" stroke="#1e1e1e" stroke-width="4.4" stroke-linecap="round"/>
<text x="1535.10" y="925.20" font-size="19.3" fill="#0f0f0f" stroke="#0f0f0f" stroke-width="0.45" textLength="55.30" >100 %</text>
<rect x="1506.00" y="942.00" width="114.00" height="26.00" fill="#b9b9b9" />
<rect x="1507.00" y="943.00" width="112.00" height="24.00" fill="none" stroke="#474849" stroke-width="2" />
<text x="1537.10" y="961.80" font-size="19.3" fill="#0f0f0f" stroke="#0f0f0f" stroke-width="0.45" textLength="53.10" >Mono</text>
<rect x="1506.00" y="986.00" width="114.00" height="26.00" fill="#bebebe" />
<rect x="1507.00" y="987.00" width="112.00" height="24.00" fill="none" stroke="#474849" stroke-width="2" />
<text x="1513.00" y="1005.50" font-size="19.3" fill="#0f0f0f" stroke="#0f0f0f" stroke-width="0.45" textLength="101.80" >Bass Mono</text>
<rect x="1506.00" y="1018.00" width="82.00" height="26.00" fill="#9d9d9d" />
<rect x="1507.00" y="1019.00" width="80.00" height="24.00" fill="none" stroke="#474849" stroke-width="2" />
<text x="1515.20" y="1037.50" font-size="19.3" fill="#0f0f0f" stroke="#0f0f0f" stroke-width="0.45" textLength="63.30" >120 Hz</text>
<circle cx="1606.90" cy="1030.80" r="12.00" fill="#bdbdbd" stroke="#484848" stroke-width="1.8"/>
<circle cx="1606.90" cy="1030.80" r="8.80" fill="#333333"/>
<clipPath id="hpc"><rect x="1596.9" y="1020.8" width="20" height="12.5"/></clipPath>
<circle cx="1606.9" cy="1030.8" r="6.1" fill="#bdbdbd" clip-path="url(#hpc)"/>
<rect x="1604.80" y="1029.80" width="4.20" height="10.20" fill="#bdbdbd" />
<text x="1682.60" y="779.70" font-size="19.3" fill="#0f0f0f" stroke="#0f0f0f" stroke-width="0.45" textLength="42.60" >Gain</text>
<path d="M1690.38 843.17 A23.9 23.9 0 0 1 1698.90 799.36" fill="none" stroke="#1e1e1e" stroke-width="4.4" stroke-linecap="butt"/>
<path d="M1707.20 799.36 A23.9 23.9 0 0 1 1715.72 843.17" fill="none" stroke="#1e1e1e" stroke-width="4.4" stroke-linecap="butt"/>
<path d="M1695.65 786.10 H1710.45 L1703.05 794.40Z" fill="#1e1e1e" />
<line x1="1703.05" y1="822.40" x2="1703.05" y2="799.50" stroke="#1e1e1e" stroke-width="4.4" stroke-linecap="round"/>
<text x="1668.60" y="863.20" font-size="19.3" fill="#0f0f0f" stroke="#0f0f0f" stroke-width="0.45" textLength="69.70" >0.00 dB</text>
<text x="1666.90" y="908.10" font-size="19.3" fill="#0f0f0f" stroke="#0f0f0f" stroke-width="0.45" textLength="75.00" >Balance</text>
<path d="M1690.43 970.77 A23.9 23.9 0 0 1 1698.95 926.96" fill="none" stroke="#1e1e1e" stroke-width="4.4" stroke-linecap="butt"/>
<path d="M1707.25 926.96 A23.9 23.9 0 0 1 1715.77 970.77" fill="none" stroke="#1e1e1e" stroke-width="4.4" stroke-linecap="butt"/>
<path d="M1695.70 913.70 H1710.50 L1703.10 922.00Z" fill="#1e1e1e" />
<line x1="1703.10" y1="950.00" x2="1703.10" y2="927.10" stroke="#1e1e1e" stroke-width="4.4" stroke-linecap="round"/>
<text x="1703.10" y="991.30" font-size="19.3" fill="#0f0f0f" stroke="#0f0f0f" stroke-width="0.45" text-anchor="middle" >C</text>
<rect x="1650.00" y="1018.00" width="62.00" height="26.00" fill="#bebebe" />
<rect x="1651.00" y="1019.00" width="60.00" height="24.00" fill="none" stroke="#474849" stroke-width="2" />
<text x="1657.00" y="1037.50" font-size="19.3" fill="#0f0f0f" stroke="#0f0f0f" stroke-width="0.45" textLength="48.60" lengthAdjust="spacingAndGlyphs" >Mute</text>
<rect x="1718.00" y="1018.00" width="38.00" height="26.00" fill="#bebebe" />
<rect x="1719.00" y="1019.00" width="36.00" height="24.00" fill="none" stroke="#474849" stroke-width="2" />
<text x="1725.20" y="1037.50" font-size="19.3" fill="#0f0f0f" stroke="#0f0f0f" stroke-width="0.45" textLength="26.00" lengthAdjust="spacingAndGlyphs" >DC</text>
</g>
<rect x="1778.10" y="828.00" width="4.20" height="80.00" fill="#262626" />
<rect x="1778.10" y="835.60" width="4.20" height="2.20" fill="#8c8c8c" />
<rect x="1784.00" y="828.00" width="4.20" height="80.00" fill="#262626" />
<rect x="1784.00" y="835.60" width="4.20" height="2.20" fill="#8c8c8c" />
<g id="reverb">
<clipPath id="dc1794"><rect x="1794" y="680" width="990" height="376" rx="9"/></clipPath>
<g clip-path="url(#dc1794)">
<rect x="1794.00" y="680.00" width="990.00" height="376.00" fill="#919191" />
<rect x="1794.00" y="680.00" width="990.00" height="34.00" fill="#aaaaaa" />
</g>
<circle cx="1813.00" cy="696.90" r="11.95" fill="#f5b53f" stroke="#3c3c3c" stroke-width="1.7"/>
<text x="1835.10" y="703.70" font-size="19.6" fill="#0a0a0a" font-weight="700" textLength="67.40" >Reverb</text>
<circle cx="2732.70" cy="696.90" r="11.95" fill="#aaaaaa" stroke="#3c3c3c" stroke-width="1.7"/>
<path d="M2726.50 697.10 A6.3 6.3 0 0 1 2733.70 690.70" fill="none" stroke="#000" stroke-width="1.9" />
<path d="M2738.90 697.50 A6.3 6.3 0 0 1 2732.10 703.20" fill="none" stroke="#000" stroke-width="1.9" />
<path d="M2723.70 696.70 L2729.70 696.70 L2726.50 699.90Z" fill="#000" />
<path d="M2741.80 697.70 L2735.80 697.70 L2738.80 694.20Z" fill="#000" />
<circle cx="2765.00" cy="696.90" r="11.95" fill="#aaaaaa" stroke="#3c3c3c" stroke-width="1.7"/>
<path d="M2758.40 690.20 H2769.10 L2772.00 693.20 V703.70 H2758.40Z" fill="#000" />
<rect x="2762.20" y="692.10" width="5.80" height="3.80" fill="#aaaaaa" />
<text x="1807.10" y="735.90" font-size="19.6" fill="#0f0f0f" font-weight="700" textLength="165.30" >Input Processing</text>
<text x="1993.00" y="735.90" font-size="19.6" fill="#0f0f0f" font-weight="700" textLength="165.30" >Early Reflections</text>
<text x="2178.80" y="735.90" font-size="19.6" fill="#0f0f0f" font-weight="700" textLength="61.30" >Global</text>
<text x="2280.90" y="735.90" font-size="19.6" fill="#0f0f0f" font-weight="700" textLength="179.30" >Diffusion Network</text>
<rect x="1810.00" y="746.00" width="74.00" height="26.00" fill="#bebebe" />
<rect x="1811.00" y="747.00" width="72.00" height="24.00" fill="none" stroke="#474849" stroke-width="2" />
<text x="1817.00" y="765.60" font-size="19.3" fill="#0f0f0f" stroke="#0f0f0f" stroke-width="0.45" textLength="60.00" >Lo Cut</text>
<rect x="1892.00" y="746.00" width="74.00" height="26.00" fill="#f5b53f" />
<rect x="1893.00" y="747.00" width="72.00" height="24.00" fill="none" stroke="#474849" stroke-width="2" />
<text x="1901.30" y="765.60" font-size="19.3" fill="#0f0f0f" stroke="#0f0f0f" stroke-width="0.45" textLength="57.70" >Hi Cut</text>
<rect x="1996.00" y="746.00" width="90.00" height="26.00" fill="#f5b53f" />
<rect x="1997.00" y="747.00" width="88.00" height="24.00" fill="none" stroke="#474849" stroke-width="2" />
<text x="2021.00" y="765.60" font-size="19.3" fill="#0f0f0f" stroke="#0f0f0f" stroke-width="0.45" textLength="40.60" >Spin</text>
<rect x="1810.00" y="778.00" width="158.00" height="122.00" fill="#191919" rx="6" />
<clipPath id="cg1"><rect x="1810" y="778" width="158.0999999999999" height="122" rx="6"/></clipPath>
<g clip-path="url(#cg1)">
<line x1="1815.21" y1="778.00" x2="1815.21" y2="900.00" stroke="#3a3a3a" stroke-width="1.5" />
<line x1="1819.34" y1="778.00" x2="1819.34" y2="900.00" stroke="#3a3a3a" stroke-width="1.5" />
<line x1="1822.92" y1="778.00" x2="1822.92" y2="900.00" stroke="#3a3a3a" stroke-width="1.5" />
<line x1="1826.08" y1="778.00" x2="1826.08" y2="900.00" stroke="#3a3a3a" stroke-width="1.5" />
<line x1="1828.90" y1="778.00" x2="1828.90" y2="900.00" stroke="#4e4e4e" stroke-width="1.5" />
<line x1="1847.47" y1="778.00" x2="1847.47" y2="900.00" stroke="#3a3a3a" stroke-width="1.5" />
<line x1="1858.34" y1="778.00" x2="1858.34" y2="900.00" stroke="#3a3a3a" stroke-width="1.5" />
<line x1="1866.05" y1="778.00" x2="1866.05" y2="900.00" stroke="#3a3a3a" stroke-width="1.5" />
<line x1="1872.03" y1="778.00" x2="1872.03" y2="900.00" stroke="#3a3a3a" stroke-width="1.5" />
<line x1="1876.91" y1="778.00" x2="1876.91" y2="900.00" stroke="#3a3a3a" stroke-width="1.5" />
<line x1="1881.04" y1="778.00" x2="1881.04" y2="900.00" stroke="#3a3a3a" stroke-width="1.5" />
<line x1="1884.62" y1="778.00" x2="1884.62" y2="900.00" stroke="#3a3a3a" stroke-width="1.5" />
<line x1="1887.78" y1="778.00" x2="1887.78" y2="900.00" stroke="#3a3a3a" stroke-width="1.5" />
<line x1="1890.60" y1="778.00" x2="1890.60" y2="900.00" stroke="#4e4e4e" stroke-width="1.5" />
<line x1="1909.17" y1="778.00" x2="1909.17" y2="900.00" stroke="#3a3a3a" stroke-width="1.5" />
<line x1="1920.04" y1="778.00" x2="1920.04" y2="900.00" stroke="#3a3a3a" stroke-width="1.5" />
<line x1="1927.75" y1="778.00" x2="1927.75" y2="900.00" stroke="#3a3a3a" stroke-width="1.5" />
<line x1="1933.73" y1="778.00" x2="1933.73" y2="900.00" stroke="#3a3a3a" stroke-width="1.5" />
<line x1="1938.61" y1="778.00" x2="1938.61" y2="900.00" stroke="#3a3a3a" stroke-width="1.5" />
<line x1="1942.74" y1="778.00" x2="1942.74" y2="900.00" stroke="#3a3a3a" stroke-width="1.5" />
<line x1="1946.32" y1="778.00" x2="1946.32" y2="900.00" stroke="#3a3a3a" stroke-width="1.5" />
<line x1="1949.48" y1="778.00" x2="1949.48" y2="900.00" stroke="#3a3a3a" stroke-width="1.5" />
<line x1="1952.30" y1="778.00" x2="1952.30" y2="900.00" stroke="#4e4e4e" stroke-width="1.5" />
<line x1="1810.00" y1="819.10" x2="1968.10" y2="819.10" stroke="#4e4e4e" stroke-width="1.5" />
<line x1="1810.00" y1="838.90" x2="1968.10" y2="838.90" stroke="#3c3c3c" stroke-width="1.5" />
<line x1="1810.00" y1="858.50" x2="1968.10" y2="858.50" stroke="#3c3c3c" stroke-width="1.5" />
<line x1="1810.00" y1="879.10" x2="1968.10" y2="879.10" stroke="#3c3c3c" stroke-width="1.5" />
</g>
<g clip-path="url(#cg1)">
<path d="M1810.00 819.50 C1816.67 819.52 1840.08 819.48 1850.00 819.60 C1859.92 819.72 1864.50 819.83 1869.50 820.20 C1874.50 820.57 1877.18 821.22 1880.00 821.80 C1882.82 822.38 1884.23 822.92 1886.40 823.70 C1888.57 824.48 1890.90 825.45 1893.00 826.50 C1895.10 827.55 1897.08 828.67 1899.00 830.00 C1900.92 831.33 1902.73 832.92 1904.50 834.50 C1906.27 836.08 1907.35 836.92 1909.60 839.50 C1911.85 842.08 1915.20 846.48 1918.00 850.00 C1920.80 853.52 1923.23 856.73 1926.40 860.60 C1929.57 864.47 1933.48 869.17 1937.00 873.20 C1940.52 877.23 1944.00 881.45 1947.50 884.80 C1951.00 888.15 1954.75 891.10 1958.00 893.30 C1961.25 895.50 1965.50 897.22 1967.00 898.00" fill="none" stroke="#80d8f6" stroke-width="3" />
</g>
<circle cx="1886.90" cy="826.80" r="11.40" fill="none" stroke="#f5b53f" stroke-width="2.6"/>
<rect x="1996.00" y="778.00" width="158.00" height="122.00" fill="#191919" rx="6" />
<clipPath id="cg2"><rect x="1996" y="778" width="158" height="122" rx="6"/></clipPath>
<g clip-path="url(#cg2)">
<line x1="2005.24" y1="778.00" x2="2005.24" y2="900.00" stroke="#3a3a3a" stroke-width="1.5" />
<line x1="2011.83" y1="778.00" x2="2011.83" y2="900.00" stroke="#3a3a3a" stroke-width="1.5" />
<line x1="2016.94" y1="778.00" x2="2016.94" y2="900.00" stroke="#3a3a3a" stroke-width="1.5" />
<line x1="2021.11" y1="778.00" x2="2021.11" y2="900.00" stroke="#3a3a3a" stroke-width="1.5" />
<line x1="2024.64" y1="778.00" x2="2024.64" y2="900.00" stroke="#3a3a3a" stroke-width="1.5" />
<line x1="2027.69" y1="778.00" x2="2027.69" y2="900.00" stroke="#3a3a3a" stroke-width="1.5" />
<line x1="2030.39" y1="778.00" x2="2030.39" y2="900.00" stroke="#3a3a3a" stroke-width="1.5" />
<line x1="2032.80" y1="778.00" x2="2032.80" y2="900.00" stroke="#4e4e4e" stroke-width="1.5" />
<line x1="2048.66" y1="778.00" x2="2048.66" y2="900.00" stroke="#3a3a3a" stroke-width="1.5" />
<line x1="2057.94" y1="778.00" x2="2057.94" y2="900.00" stroke="#3a3a3a" stroke-width="1.5" />
<line x1="2064.53" y1="778.00" x2="2064.53" y2="900.00" stroke="#3a3a3a" stroke-width="1.5" />
<line x1="2069.64" y1="778.00" x2="2069.64" y2="900.00" stroke="#3a3a3a" stroke-width="1.5" />
<line x1="2073.81" y1="778.00" x2="2073.81" y2="900.00" stroke="#3a3a3a" stroke-width="1.5" />
<line x1="2077.34" y1="778.00" x2="2077.34" y2="900.00" stroke="#3a3a3a" stroke-width="1.5" />
<line x1="2080.39" y1="778.00" x2="2080.39" y2="900.00" stroke="#3a3a3a" stroke-width="1.5" />
<line x1="2083.09" y1="778.00" x2="2083.09" y2="900.00" stroke="#3a3a3a" stroke-width="1.5" />
<line x1="2085.50" y1="778.00" x2="2085.50" y2="900.00" stroke="#4e4e4e" stroke-width="1.5" />
<line x1="2101.36" y1="778.00" x2="2101.36" y2="900.00" stroke="#3a3a3a" stroke-width="1.5" />
<line x1="2110.64" y1="778.00" x2="2110.64" y2="900.00" stroke="#3a3a3a" stroke-width="1.5" />
<line x1="2117.23" y1="778.00" x2="2117.23" y2="900.00" stroke="#3a3a3a" stroke-width="1.5" />
<line x1="2122.34" y1="778.00" x2="2122.34" y2="900.00" stroke="#3a3a3a" stroke-width="1.5" />
<line x1="2126.51" y1="778.00" x2="2126.51" y2="900.00" stroke="#3a3a3a" stroke-width="1.5" />
<line x1="2130.04" y1="778.00" x2="2130.04" y2="900.00" stroke="#3a3a3a" stroke-width="1.5" />
<line x1="2133.09" y1="778.00" x2="2133.09" y2="900.00" stroke="#3a3a3a" stroke-width="1.5" />
<line x1="2135.79" y1="778.00" x2="2135.79" y2="900.00" stroke="#3a3a3a" stroke-width="1.5" />
<line x1="2138.20" y1="778.00" x2="2138.20" y2="900.00" stroke="#4e4e4e" stroke-width="1.5" />
</g>
<circle cx="2072.90" cy="825.20" r="11.40" fill="none" stroke="#f5b53f" stroke-width="2.6"/>
<rect x="1810.00" y="906.00" width="90.00" height="26.00" fill="#dcdcdc" />
<rect x="1810.00" y="906.00" width="44.00" height="26.00" fill="#84daf5" />
<rect x="1811.00" y="907.00" width="88.00" height="24.00" fill="none" stroke="#474849" stroke-width="2" />
<text x="1822.50" y="925.90" font-size="19.3" fill="#0f0f0f" stroke="#0f0f0f" stroke-width="0.45" textLength="63.90" >830 Hz</text>
<rect x="1908.00" y="906.00" width="60.00" height="26.00" fill="#dcdcdc" />
<rect x="1908.00" y="906.00" width="38.00" height="26.00" fill="#84daf5" />
<rect x="1909.00" y="907.00" width="58.00" height="24.00" fill="none" stroke="#474849" stroke-width="2" />
<text x="1919.00" y="925.90" font-size="19.3" fill="#0f0f0f" stroke="#0f0f0f" stroke-width="0.45" textLength="40.10" >5.85</text>
<rect x="1996.00" y="906.00" width="90.00" height="26.00" fill="#dcdcdc" />
<rect x="1996.00" y="906.00" width="44.00" height="26.00" fill="#84daf5" />
<rect x="1997.00" y="907.00" width="88.00" height="24.00" fill="none" stroke="#474849" stroke-width="2" />
<text x="2006.50" y="925.90" font-size="19.3" fill="#0f0f0f" stroke="#0f0f0f" stroke-width="0.45" textLength="70.20" >0.30 Hz</text>
<rect x="2094.00" y="906.00" width="60.00" height="26.00" fill="#dcdcdc" />
<rect x="2094.00" y="906.00" width="38.00" height="26.00" fill="#84daf5" />
<rect x="2095.00" y="907.00" width="58.00" height="24.00" fill="none" stroke="#474849" stroke-width="2" />
<text x="2104.90" y="925.90" font-size="19.3" fill="#0f0f0f" stroke="#0f0f0f" stroke-width="0.45" textLength="40.20" >17.5</text>
<text x="1817.20" y="971.70" font-size="19.3" fill="#0f0f0f" stroke="#0f0f0f" stroke-width="0.45" textLength="83.40" >Predelay</text>
<path d="M1844.13 1025.17 A23.9 23.9 0 0 1 1834.20 997.12" fill="none" stroke="#80d8f6" stroke-width="4.4" stroke-linecap="butt"/>
<path d="M1835.50 994.05 A23.9 23.9 0 1 1 1869.47 1025.17" fill="none" stroke="#1e1e1e" stroke-width="4.4" stroke-linecap="butt"/>
<line x1="1856.33" y1="1004.74" x2="1834.67" y2="997.28" stroke="#1e1e1e" stroke-width="4.4" stroke-linecap="round"/>
<text x="1821.00" y="1045.50" font-size="19.3" fill="#0f0f0f" stroke="#0f0f0f" stroke-width="0.45" textLength="72.20" >2.50 ms</text>
<text x="1992.40" y="971.70" font-size="19.3" fill="#0f0f0f" stroke="#0f0f0f" stroke-width="0.45" textLength="59.10" >Shape</text>
<path d="M2008.33 1024.97 A23.9 23.9 0 0 1 2021.00 980.80" fill="none" stroke="#80d8f6" stroke-width="4.4" stroke-linecap="butt"/>
<path d="M2024.33 981.03 A23.9 23.9 0 0 1 2033.67 1024.97" fill="none" stroke="#1e1e1e" stroke-width="4.4" stroke-linecap="butt"/>
<line x1="2021.00" y1="1004.20" x2="2021.00" y2="981.30" stroke="#1e1e1e" stroke-width="4.4" stroke-linecap="round"/>
<text x="2000.60" y="1045.90" font-size="19.3" fill="#0f0f0f" stroke="#0f0f0f" stroke-width="0.45" textLength="40.40" >0.50</text>
<text x="2178.80" y="764.40" font-size="19.3" fill="#0f0f0f" stroke="#0f0f0f" stroke-width="0.45" textLength="67.90" lengthAdjust="spacingAndGlyphs" >Quality</text>
<rect x="2178.00" y="776.00" width="82.00" height="26.00" fill="#dcdcdc" />
<rect x="2179.00" y="777.00" width="80.00" height="24.00" fill="none" stroke="#474849" stroke-width="2" />
<text x="2183.30" y="795.20" font-size="19.3" fill="#0f0f0f" stroke="#0f0f0f" stroke-width="0.45" textLength="32.70" >Eco</text>
<path d="M2242.75 783.85 H2255.25 L2249.00 793.35Z" fill="#0f0f0f" />
<text x="2200.60" y="847.90" font-size="19.3" fill="#0f0f0f" stroke="#0f0f0f" stroke-width="0.45" textLength="37.70" >Size</text>
<path d="M2206.33 900.77 A23.9 23.9 0 1 1 2242.89 879.67" fill="none" stroke="#80d8f6" stroke-width="4.4" stroke-linecap="butt"/>
<path d="M2242.77 883.00 A23.9 23.9 0 0 1 2231.67 900.77" fill="none" stroke="#1e1e1e" stroke-width="4.4" stroke-linecap="butt"/>
<line x1="2219.50" y1="880.48" x2="2242.39" y2="879.68" stroke="#1e1e1e" stroke-width="4.4" stroke-linecap="round"/>
<text x="2187.20" y="922.00" font-size="19.3" fill="#0f0f0f" stroke="#0f0f0f" stroke-width="0.45" textLength="63.90" >100.00</text>
<text x="2186.50" y="971.70" font-size="19.3" fill="#0f0f0f" stroke="#0f0f0f" stroke-width="0.45" textLength="63.90" lengthAdjust="spacingAndGlyphs" >Stereo</text>
<path d="M2206.33 1024.97 A23.9 23.9 0 1 1 2242.54 1008.85" fill="none" stroke="#80d8f6" stroke-width="4.4" stroke-linecap="butt"/>
<path d="M2241.73 1012.09 A23.9 23.9 0 0 1 2231.67 1024.97" fill="none" stroke="#1e1e1e" stroke-width="4.4" stroke-linecap="butt"/>
<line x1="2219.49" y1="1004.79" x2="2242.04" y2="1008.76" stroke="#1e1e1e" stroke-width="4.4" stroke-linecap="round"/>
<text x="2187.30" y="1045.90" font-size="19.3" fill="#0f0f0f" stroke="#0f0f0f" stroke-width="0.45" textLength="63.10" >100.00</text>
<rect x="2280.00" y="746.00" width="56.00" height="26.00" fill="#f5b53f" />
<rect x="2281.00" y="747.00" width="54.00" height="24.00" fill="none" stroke="#474849" stroke-width="2" />
<text x="2286.80" y="765.60" font-size="19.3" fill="#0f0f0f" stroke="#0f0f0f" stroke-width="0.45" textLength="43.10" >High</text>
<rect x="2346.00" y="746.00" width="90.00" height="26.00" fill="#dcdcdc" />
<rect x="2346.00" y="746.00" width="73.00" height="26.00" fill="#84daf5" />
<rect x="2347.00" y="747.00" width="88.00" height="24.00" fill="none" stroke="#474849" stroke-width="2" />
<text x="2350.70" y="765.60" font-size="19.3" fill="#0f0f0f" stroke="#0f0f0f" stroke-width="0.45" textLength="80.90" >4.50 kHz</text>
<rect x="2446.00" y="746.00" width="56.00" height="26.00" fill="#dcdcdc" />
<rect x="2446.00" y="746.00" width="34.00" height="26.00" fill="#84daf5" />
<rect x="2447.00" y="747.00" width="54.00" height="24.00" fill="none" stroke="#474849" stroke-width="2" />
<text x="2454.20" y="765.60" font-size="19.3" fill="#0f0f0f" stroke="#0f0f0f" stroke-width="0.45" textLength="40.80" >0.70</text>
<rect x="2512.00" y="746.00" width="89.00" height="26.00" fill="#f5b53f" />
<rect x="2513.00" y="747.00" width="87.00" height="24.00" fill="none" stroke="#474849" stroke-width="2" />
<text x="2522.80" y="765.60" font-size="19.3" fill="#0f0f0f" stroke="#0f0f0f" stroke-width="0.45" textLength="67.90" >Chorus</text>
<rect x="2280.00" y="778.00" width="222.00" height="122.00" fill="#191919" rx="6" />
<clipPath id="cg3"><rect x="2280" y="778" width="222.19999999999982" height="122" rx="6"/></clipPath>
<g clip-path="url(#cg3)">
<line x1="2282.46" y1="778.00" x2="2282.46" y2="900.00" stroke="#3a3a3a" stroke-width="1.5" />
<line x1="2295.77" y1="778.00" x2="2295.77" y2="900.00" stroke="#3a3a3a" stroke-width="1.5" />
<line x1="2305.22" y1="778.00" x2="2305.22" y2="900.00" stroke="#3a3a3a" stroke-width="1.5" />
<line x1="2312.54" y1="778.00" x2="2312.54" y2="900.00" stroke="#3a3a3a" stroke-width="1.5" />
<line x1="2318.53" y1="778.00" x2="2318.53" y2="900.00" stroke="#3a3a3a" stroke-width="1.5" />
<line x1="2323.59" y1="778.00" x2="2323.59" y2="900.00" stroke="#3a3a3a" stroke-width="1.5" />
<line x1="2327.97" y1="778.00" x2="2327.97" y2="900.00" stroke="#3a3a3a" stroke-width="1.5" />
<line x1="2331.84" y1="778.00" x2="2331.84" y2="900.00" stroke="#3a3a3a" stroke-width="1.5" />
<line x1="2335.30" y1="778.00" x2="2335.30" y2="900.00" stroke="#4e4e4e" stroke-width="1.5" />
<line x1="2358.06" y1="778.00" x2="2358.06" y2="900.00" stroke="#3a3a3a" stroke-width="1.5" />
<line x1="2371.37" y1="778.00" x2="2371.37" y2="900.00" stroke="#3a3a3a" stroke-width="1.5" />
<line x1="2380.82" y1="778.00" x2="2380.82" y2="900.00" stroke="#3a3a3a" stroke-width="1.5" />
<line x1="2388.14" y1="778.00" x2="2388.14" y2="900.00" stroke="#3a3a3a" stroke-width="1.5" />
<line x1="2394.13" y1="778.00" x2="2394.13" y2="900.00" stroke="#3a3a3a" stroke-width="1.5" />
<line x1="2399.19" y1="778.00" x2="2399.19" y2="900.00" stroke="#3a3a3a" stroke-width="1.5" />
<line x1="2403.57" y1="778.00" x2="2403.57" y2="900.00" stroke="#3a3a3a" stroke-width="1.5" />
<line x1="2407.44" y1="778.00" x2="2407.44" y2="900.00" stroke="#3a3a3a" stroke-width="1.5" />
<line x1="2410.90" y1="778.00" x2="2410.90" y2="900.00" stroke="#4e4e4e" stroke-width="1.5" />
<line x1="2433.66" y1="778.00" x2="2433.66" y2="900.00" stroke="#3a3a3a" stroke-width="1.5" />
<line x1="2446.97" y1="778.00" x2="2446.97" y2="900.00" stroke="#3a3a3a" stroke-width="1.5" />
<line x1="2456.42" y1="778.00" x2="2456.42" y2="900.00" stroke="#3a3a3a" stroke-width="1.5" />
<line x1="2463.74" y1="778.00" x2="2463.74" y2="900.00" stroke="#3a3a3a" stroke-width="1.5" />
<line x1="2469.73" y1="778.00" x2="2469.73" y2="900.00" stroke="#3a3a3a" stroke-width="1.5" />
<line x1="2474.79" y1="778.00" x2="2474.79" y2="900.00" stroke="#3a3a3a" stroke-width="1.5" />
<line x1="2479.17" y1="778.00" x2="2479.17" y2="900.00" stroke="#3a3a3a" stroke-width="1.5" />
<line x1="2483.04" y1="778.00" x2="2483.04" y2="900.00" stroke="#3a3a3a" stroke-width="1.5" />
<line x1="2486.50" y1="778.00" x2="2486.50" y2="900.00" stroke="#4e4e4e" stroke-width="1.5" />
<line x1="2280.00" y1="809.00" x2="2502.20" y2="809.00" stroke="#4e4e4e" stroke-width="1.5" />
<line x1="2280.00" y1="827.30" x2="2502.20" y2="827.30" stroke="#262626" stroke-width="1.5" />
<line x1="2280.00" y1="845.80" x2="2502.20" y2="845.80" stroke="#3c3c3c" stroke-width="1.5" />
<line x1="2280.00" y1="864.10" x2="2502.20" y2="864.10" stroke="#262626" stroke-width="1.5" />
<line x1="2280.00" y1="882.70" x2="2502.20" y2="882.70" stroke="#3c3c3c" stroke-width="1.5" />
</g>
<path d="M2280.00 809.00 C2300.00 809.00 2374.28 809.00 2400.00 809.00 C2425.72 809.00 2426.83 808.83 2434.30 809.00 C2441.77 809.17 2441.65 809.42 2444.80 810.00 C2447.95 810.58 2450.73 811.37 2453.20 812.50 C2455.67 813.63 2457.48 815.18 2459.60 816.80 C2461.72 818.42 2463.80 820.77 2465.90 822.20 C2468.00 823.63 2469.75 824.58 2472.20 825.40 C2474.65 826.22 2477.80 826.78 2480.60 827.10 C2483.40 827.42 2485.40 827.27 2489.00 827.30 C2492.60 827.33 2500.00 827.30 2502.20 827.30" fill="none" stroke="#80d8f6" stroke-width="3" />
<circle cx="2337.00" cy="821.00" r="11.60" fill="#191919" stroke="#8c8c8c" stroke-width="2.6"/>
<text x="2337.00" y="826.60" font-size="15" fill="#8c8c8c" stroke="#8c8c8c" stroke-width="0.45" text-anchor="middle" >1</text>
<circle cx="2451.10" cy="826.90" r="11.60" fill="#191919" stroke="#f5b53f" stroke-width="2.6"/>
<text x="2451.10" y="832.40" font-size="15" fill="#f5b53f" stroke="#f5b53f" stroke-width="0.45" text-anchor="middle" >2</text>
<rect x="2512.00" y="778.00" width="158.00" height="122.00" fill="#191919" rx="6" />
<clipPath id="cg4"><rect x="2512.2" y="778" width="157.60000000000036" height="122" rx="6"/></clipPath>
<g clip-path="url(#cg4)">
<line x1="2521.91" y1="778.00" x2="2521.91" y2="900.00" stroke="#3a3a3a" stroke-width="1.5" />
<line x1="2528.41" y1="778.00" x2="2528.41" y2="900.00" stroke="#3a3a3a" stroke-width="1.5" />
<line x1="2533.45" y1="778.00" x2="2533.45" y2="900.00" stroke="#3a3a3a" stroke-width="1.5" />
<line x1="2537.56" y1="778.00" x2="2537.56" y2="900.00" stroke="#3a3a3a" stroke-width="1.5" />
<line x1="2541.05" y1="778.00" x2="2541.05" y2="900.00" stroke="#3a3a3a" stroke-width="1.5" />
<line x1="2544.06" y1="778.00" x2="2544.06" y2="900.00" stroke="#3a3a3a" stroke-width="1.5" />
<line x1="2546.72" y1="778.00" x2="2546.72" y2="900.00" stroke="#3a3a3a" stroke-width="1.5" />
<line x1="2549.10" y1="778.00" x2="2549.10" y2="900.00" stroke="#4e4e4e" stroke-width="1.5" />
<line x1="2564.75" y1="778.00" x2="2564.75" y2="900.00" stroke="#3a3a3a" stroke-width="1.5" />
<line x1="2573.91" y1="778.00" x2="2573.91" y2="900.00" stroke="#3a3a3a" stroke-width="1.5" />
<line x1="2580.41" y1="778.00" x2="2580.41" y2="900.00" stroke="#3a3a3a" stroke-width="1.5" />
<line x1="2585.45" y1="778.00" x2="2585.45" y2="900.00" stroke="#3a3a3a" stroke-width="1.5" />
<line x1="2589.56" y1="778.00" x2="2589.56" y2="900.00" stroke="#3a3a3a" stroke-width="1.5" />
<line x1="2593.05" y1="778.00" x2="2593.05" y2="900.00" stroke="#3a3a3a" stroke-width="1.5" />
<line x1="2596.06" y1="778.00" x2="2596.06" y2="900.00" stroke="#3a3a3a" stroke-width="1.5" />
<line x1="2598.72" y1="778.00" x2="2598.72" y2="900.00" stroke="#3a3a3a" stroke-width="1.5" />
<line x1="2601.10" y1="778.00" x2="2601.10" y2="900.00" stroke="#4e4e4e" stroke-width="1.5" />
<line x1="2616.75" y1="778.00" x2="2616.75" y2="900.00" stroke="#3a3a3a" stroke-width="1.5" />
<line x1="2625.91" y1="778.00" x2="2625.91" y2="900.00" stroke="#3a3a3a" stroke-width="1.5" />
<line x1="2632.41" y1="778.00" x2="2632.41" y2="900.00" stroke="#3a3a3a" stroke-width="1.5" />
<line x1="2637.45" y1="778.00" x2="2637.45" y2="900.00" stroke="#3a3a3a" stroke-width="1.5" />
<line x1="2641.56" y1="778.00" x2="2641.56" y2="900.00" stroke="#3a3a3a" stroke-width="1.5" />
<line x1="2645.05" y1="778.00" x2="2645.05" y2="900.00" stroke="#3a3a3a" stroke-width="1.5" />
<line x1="2648.06" y1="778.00" x2="2648.06" y2="900.00" stroke="#3a3a3a" stroke-width="1.5" />
<line x1="2650.72" y1="778.00" x2="2650.72" y2="900.00" stroke="#3a3a3a" stroke-width="1.5" />
<line x1="2653.10" y1="778.00" x2="2653.10" y2="900.00" stroke="#4e4e4e" stroke-width="1.5" />
</g>
<circle cx="2539.00" cy="874.90" r="11.40" fill="none" stroke="#f5b53f" stroke-width="2.6"/>
<rect x="2280.00" y="906.00" width="56.00" height="26.00" fill="#bebebe" />
<rect x="2281.00" y="907.00" width="54.00" height="24.00" fill="none" stroke="#474849" stroke-width="2" />
<text x="2291.30" y="925.90" font-size="19.3" fill="#0f0f0f" stroke="#0f0f0f" stroke-width="0.45" textLength="36.20" >Low</text>
<rect x="2346.00" y="906.00" width="90.00" height="26.00" fill="#9d9d9d" />
<rect x="2347.00" y="907.00" width="88.00" height="24.00" fill="none" stroke="#474849" stroke-width="2" />
<text x="2356.10" y="925.90" font-size="19.3" fill="#0f0f0f" stroke="#0f0f0f" stroke-width="0.45" textLength="70.50" >90.0 Hz</text>
<rect x="2446.00" y="906.00" width="56.00" height="26.00" fill="#9d9d9d" />
<rect x="2447.00" y="907.00" width="54.00" height="24.00" fill="none" stroke="#474849" stroke-width="2" />
<text x="2454.20" y="925.90" font-size="19.3" fill="#0f0f0f" stroke="#0f0f0f" stroke-width="0.45" textLength="40.80" >0.75</text>
<rect x="2512.00" y="906.00" width="90.00" height="26.00" fill="#dcdcdc" />
<rect x="2512.00" y="906.00" width="10.00" height="26.00" fill="#84daf5" />
<rect x="2513.00" y="907.00" width="88.00" height="24.00" fill="none" stroke="#474849" stroke-width="2" />
<text x="2522.70" y="925.90" font-size="19.3" fill="#0f0f0f" stroke="#0f0f0f" stroke-width="0.45" textLength="70.20" >0.02 Hz</text>
<rect x="2610.00" y="906.00" width="60.00" height="26.00" fill="#dcdcdc" />
<rect x="2610.00" y="906.00" width="8.00" height="26.00" fill="#84daf5" />
<rect x="2611.00" y="907.00" width="58.00" height="24.00" fill="none" stroke="#474849" stroke-width="2" />
<text x="2620.70" y="925.90" font-size="19.3" fill="#0f0f0f" stroke="#0f0f0f" stroke-width="0.45" textLength="40.00" >0.02</text>
<text x="2281.30" y="969.80" font-size="19.3" fill="#0f0f0f" stroke="#0f0f0f" stroke-width="0.45" textLength="109.10" >Decay Time</text>
<path d="M2322.13 1022.67 A23.9 23.9 0 0 1 2340.01 979.08" fill="none" stroke="#80d8f6" stroke-width="4.4" stroke-linecap="butt"/>
<path d="M2343.21 980.03 A23.9 23.9 0 0 1 2347.47 1022.67" fill="none" stroke="#1e1e1e" stroke-width="4.4" stroke-linecap="butt"/>
<line x1="2334.91" y1="1001.91" x2="2339.90" y2="979.56" stroke="#1e1e1e" stroke-width="4.4" stroke-linecap="round"/>
<text x="2306.60" y="1043.90" font-size="19.3" fill="#0f0f0f" stroke="#0f0f0f" stroke-width="0.45" textLength="55.00" >4.34 s</text>
<rect x="2412.00" y="952.00" width="92.00" height="26.00" fill="#bebebe" />
<rect x="2413.00" y="953.00" width="90.00" height="24.00" fill="none" stroke="#474849" stroke-width="2" />
<text x="2427.00" y="972.20" font-size="19.3" fill="#0f0f0f" stroke="#0f0f0f" stroke-width="0.45" textLength="63.20" >Freeze</text>
<rect x="2412.00" y="986.00" width="42.00" height="26.00" fill="#f5b53f" />
<rect x="2413.00" y="987.00" width="40.00" height="24.00" fill="none" stroke="#474849" stroke-width="2" />
<text x="2415.50" y="1005.70" font-size="19.3" fill="#0f0f0f" stroke="#0f0f0f" stroke-width="0.45" textLength="35.50" >Flat</text>
<rect x="2462.00" y="986.00" width="42.00" height="26.00" fill="#f5b53f" />
<rect x="2463.00" y="987.00" width="40.00" height="24.00" fill="none" stroke="#474849" stroke-width="2" />
<text x="2466.90" y="1005.70" font-size="19.3" fill="#0f0f0f" stroke="#0f0f0f" stroke-width="0.45" textLength="33.60" >Cut</text>
<text x="2516.90" y="969.80" font-size="19.3" fill="#0f0f0f" stroke="#0f0f0f" stroke-width="0.45" textLength="71.60" >Density</text>
<path d="M2538.23 1022.67 A23.9 23.9 0 1 1 2566.20 984.04" fill="none" stroke="#80d8f6" stroke-width="4.4" stroke-linecap="butt"/>
<path d="M2568.61 986.35 A23.9 23.9 0 0 1 2563.57 1022.67" fill="none" stroke="#1e1e1e" stroke-width="4.4" stroke-linecap="butt"/>
<line x1="2551.22" y1="1002.02" x2="2565.88" y2="984.42" stroke="#1e1e1e" stroke-width="4.4" stroke-linecap="round"/>
<text x="2528.80" y="1043.90" font-size="19.3" fill="#0f0f0f" stroke="#0f0f0f" stroke-width="0.45" textLength="43.70" >60 %</text>
<text x="2608.50" y="969.80" font-size="19.3" fill="#0f0f0f" stroke="#0f0f0f" stroke-width="0.45" textLength="50.80" >Scale</text>
<path d="M2622.13 1022.67 A23.9 23.9 0 0 1 2618.84 984.61" fill="none" stroke="#80d8f6" stroke-width="4.4" stroke-linecap="butt"/>
<path d="M2621.47 982.56 A23.9 23.9 0 1 1 2647.47 1022.67" fill="none" stroke="#1e1e1e" stroke-width="4.4" stroke-linecap="butt"/>
<line x1="2634.47" y1="1002.03" x2="2619.17" y2="984.98" stroke="#1e1e1e" stroke-width="4.4" stroke-linecap="round"/>
<text x="2613.20" y="1043.90" font-size="19.3" fill="#0f0f0f" stroke="#0f0f0f" stroke-width="0.45" textLength="43.20" >40 %</text>
<text x="2696.80" y="735.50" font-size="19.3" fill="#0f0f0f" stroke="#0f0f0f" stroke-width="0.45" textLength="69.70" lengthAdjust="spacingAndGlyphs" >Reflect</text>
<path d="M2718.23 789.57 A23.9 23.9 0 0 1 2729.65 745.43" fill="none" stroke="#80d8f6" stroke-width="4.4" stroke-linecap="butt"/>
<path d="M2732.98 745.49 A23.9 23.9 0 0 1 2743.57 789.57" fill="none" stroke="#1e1e1e" stroke-width="4.4" stroke-linecap="butt"/>
<line x1="2730.87" y1="768.80" x2="2729.68" y2="745.93" stroke="#1e1e1e" stroke-width="4.4" stroke-linecap="round"/>
<text x="2700.50" y="809.60" font-size="19.3" fill="#0f0f0f" stroke="#0f0f0f" stroke-width="0.45" textLength="58.60" >0.0 dB</text>
<text x="2696.80" y="853.60" font-size="19.3" fill="#0f0f0f" stroke="#0f0f0f" stroke-width="0.45" textLength="69.30" lengthAdjust="spacingAndGlyphs" >Diffuse</text>
<path d="M2718.23 906.87 A23.9 23.9 0 0 1 2729.65 862.73" fill="none" stroke="#80d8f6" stroke-width="4.4" stroke-linecap="butt"/>
<path d="M2732.98 862.79 A23.9 23.9 0 0 1 2743.57 906.87" fill="none" stroke="#1e1e1e" stroke-width="4.4" stroke-linecap="butt"/>
<line x1="2730.87" y1="886.10" x2="2729.68" y2="863.23" stroke="#1e1e1e" stroke-width="4.4" stroke-linecap="round"/>
<text x="2700.50" y="928.00" font-size="19.3" fill="#0f0f0f" stroke="#0f0f0f" stroke-width="0.45" textLength="58.60" >0.0 dB</text>
<text x="2691.20" y="971.90" font-size="19.3" fill="#0f0f0f" stroke="#0f0f0f" stroke-width="0.45" textLength="81.50" lengthAdjust="spacingAndGlyphs" >Dry/Wet</text>
<path d="M2718.23 1024.77 A23.9 23.9 0 0 1 2737.49 981.53" fill="none" stroke="#80d8f6" stroke-width="4.4" stroke-linecap="butt"/>
<path d="M2740.62 982.67 A23.9 23.9 0 0 1 2743.57 1024.77" fill="none" stroke="#1e1e1e" stroke-width="4.4" stroke-linecap="butt"/>
<line x1="2731.04" y1="1004.02" x2="2737.35" y2="982.01" stroke="#1e1e1e" stroke-width="4.4" stroke-linecap="round"/>
<text x="2709.30" y="1045.50" font-size="19.3" fill="#0f0f0f" stroke="#0f0f0f" stroke-width="0.45" textLength="42.80" lengthAdjust="spacingAndGlyphs" >56 %</text>
</g>
<rect x="2790.10" y="828.00" width="4.20" height="80.00" fill="#262626" />
<rect x="2790.10" y="835.60" width="4.20" height="2.20" fill="#8c8c8c" />
<rect x="2796.00" y="828.00" width="4.20" height="80.00" fill="#262626" />
<rect x="2796.00" y="835.60" width="4.20" height="2.20" fill="#8c8c8c" />
<g id="drop-area">
<rect x="2805.80" y="680.00" width="3422.00" height="376.00" fill="#919191" />
<text x="2930.60" y="873.80" font-size="19.3" fill="#101010" stroke="#101010" stroke-width="0.45" textLength="364.80" lengthAdjust="spacingAndGlyphs" >Suelte aquí un Instrumento o muestra</text>
</g>
<rect x="2700.00" y="1056.00" width="800.00" height="30.00" fill="#464646" />
<rect x="-20.00" y="1064.00" width="2754.00" height="30.00" fill="#717171" rx="8" />
<rect x="3377.00" y="1064.00" width="100.00" height="30.00" fill="#717171" rx="8" />
</svg>
</body></html>
